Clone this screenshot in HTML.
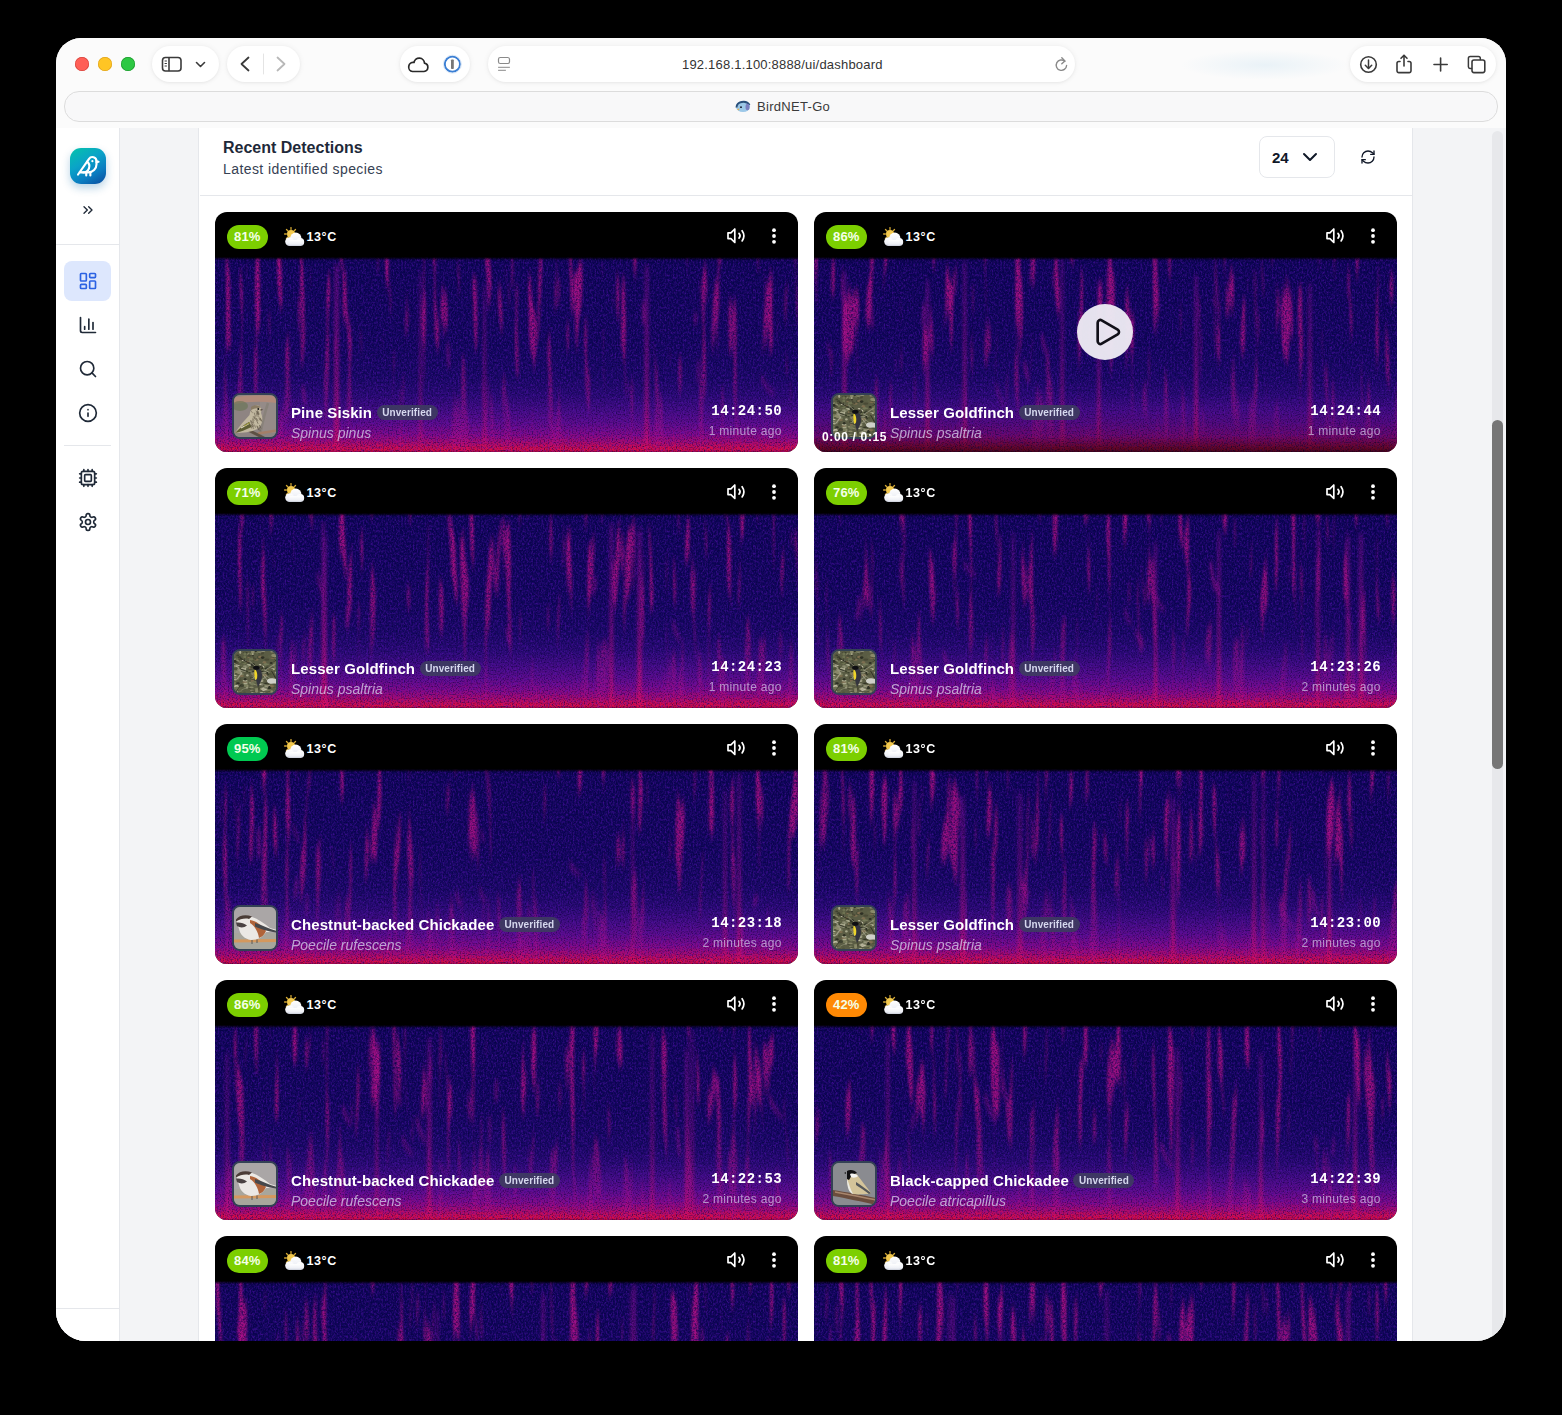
<!DOCTYPE html><html><head><meta charset="utf-8"><title>BirdNET-Go</title><style>

*{margin:0;padding:0;box-sizing:border-box}
html,body{width:1562px;height:1415px;overflow:hidden;background:#000;font-family:"Liberation Sans",sans-serif}
.win{position:absolute;left:56px;top:38px;width:1450px;height:1303px;border-radius:25px 25px 30px 30px;overflow:hidden;background:#fafafa}
.abs{position:absolute}
.tb{position:absolute;left:0;top:0;width:1450px;height:90px;background:linear-gradient(#fbfbfb,#f8f8f8)}
.pill{position:absolute;top:8px;height:36px;border-radius:18px;background:#fff;box-shadow:0 0 6px rgba(0,0,0,0.06),0 1px 3px rgba(0,0,0,0.05)}
.dot{position:absolute;top:19px;width:14px;height:14px;border-radius:50%}
.tabbar{position:absolute;left:8px;top:53px;width:1434px;height:30px;border-radius:15px;border:1.5px solid #dcdcdc;background:#f7f7f8}
.url{position:absolute;left:626px;top:21px;font-size:13px;color:#333;letter-spacing:0.05px}
.tabt{position:absolute;left:701px;top:62px;font-size:13px;color:#3c3c3c}
.content{position:absolute;left:0;top:90px;width:1450px;height:1213px;background:#f3f4f6}
.side{position:absolute;left:0;top:0;width:63px;height:1213px;background:#fff;border-right:1px solid #e5e7eb}
.panel{position:absolute;left:143px;top:0;width:1214px;height:1213px;background:#fff;border-left:1px solid #e5e7eb;border-right:1px solid #e5e7eb}
.track{position:absolute;left:1436px;top:3px;width:11px;height:1210px;background:#e6e7ea;border-radius:5px 5px 0 0}
.thumbbar{position:absolute;left:1436px;top:292px;width:11px;height:349px;background:#767676;border-radius:6px}
.card{position:absolute;width:583px;height:240px;border-radius:12px;overflow:hidden;background:#000}
.spec{position:absolute;left:0;top:45px;width:583px;height:195px}
.badge{position:absolute;left:12px;top:13px;height:24px;border-radius:12px;color:#f4ffe8;font-size:13px;font-weight:bold;line-height:24px;text-align:center;letter-spacing:0.2px}
.temp{position:absolute;left:91.5px;top:16px;font-size:12.5px;font-weight:bold;color:#fff;letter-spacing:0.6px}
.thumb{position:absolute;left:17px;top:181px;width:46px;height:46px;border-radius:8px;border:2px solid #334155;overflow:hidden;background:#8a8580}
.name{position:absolute;left:76px;top:191px;font-size:15px;font-weight:bold;color:#fff;white-space:nowrap;display:flex;align-items:center;letter-spacing:0.1px}
.unv{display:inline-block;margin-left:4.5px;height:15.5px;line-height:15.5px;padding:0 5.5px;border-radius:8px;background:rgba(62,62,96,0.88);color:#d6d8ee;font-size:10px;font-weight:bold;position:relative;top:0px;letter-spacing:0.1px}
.sci{position:absolute;left:76px;top:212px;font-size:14px;font-style:italic;color:rgba(215,205,235,0.78);white-space:nowrap}
.time{position:absolute;right:15.9px;top:189px;font-family:"Liberation Mono",monospace;font-size:14px;font-weight:bold;color:#fff;letter-spacing:0.45px}
.ago{position:absolute;right:16.3px;top:211px;font-size:12px;color:rgba(225,215,245,0.66);letter-spacing:0.3px}

</style></head><body>
<svg width="0" height="0" style="position:absolute">
<defs>
<linearGradient id="sg" x1="0" y1="0" x2="0" y2="1">
<stop offset="0" stop-color="#070342"/>
<stop offset="0.03" stop-color="#0b0554"/>
<stop offset="0.45" stop-color="#0f065a"/>
<stop offset="0.62" stop-color="#160862"/>
<stop offset="0.71" stop-color="#260a70"/>
<stop offset="0.78" stop-color="#400c80"/>
<stop offset="0.85" stop-color="#5e0c8a"/>
<stop offset="0.91" stop-color="#860a86"/>
<stop offset="0.95" stop-color="#ae0a6c"/>
<stop offset="0.975" stop-color="#d00c50"/>
<stop offset="0.99" stop-color="#de0c44"/>
<stop offset="1" stop-color="#a0063e"/>
</linearGradient>
<linearGradient id="smask" x1="0" y1="0" x2="0" y2="1">
<stop offset="0" stop-color="#fff" stop-opacity="1"/>
<stop offset="0.45" stop-color="#fff" stop-opacity="0.85"/>
<stop offset="0.75" stop-color="#fff" stop-opacity="0.5"/>
<stop offset="1" stop-color="#fff" stop-opacity="0.3"/>
</linearGradient>
<linearGradient id="colg" x1="0" y1="0" x2="0" y2="1">
<stop offset="0" stop-color="#a012a0" stop-opacity="0.5"/>
<stop offset="0.6" stop-color="#c0108a" stop-opacity="0.7"/>
<stop offset="1" stop-color="#e01060" stop-opacity="0.9"/>
</linearGradient>
<filter color-interpolation-filters="sRGB" id="blot" x="0" y="0" width="100%" height="100%">
<feTurbulence type="fractalNoise" baseFrequency="0.6 0.4" numOctaves="2" seed="21"/>
<feColorMatrix type="matrix" values="0 0 0 0 0.36  0 0 0 0 0.08  0 0 0 0 0.72  0 0 0 2.4 -0.95"/>
</filter>
<filter color-interpolation-filters="sRGB" id="spk" x="0" y="0" width="100%" height="100%">
<feTurbulence type="fractalNoise" baseFrequency="0.75" numOctaves="1" seed="5"/>
<feColorMatrix type="matrix" values="0 0 0 0 0.02  0 0 0 0 0.01  0 0 0 0 0.2  0 0 0 -3 1.6"/>
</filter>
<filter color-interpolation-filters="sRGB" id="cb" x="-50%" y="0" width="200%" height="100%"><feGaussianBlur stdDeviation="1.4 3"/></filter>
<linearGradient id="topfade" x1="0" y1="0" x2="0" y2="1">
<stop offset="0" stop-color="#000" stop-opacity="1"/>
<stop offset="1" stop-color="#000" stop-opacity="0"/>
</linearGradient>
<linearGradient id="hov" x1="0" y1="0" x2="0" y2="1">
<stop offset="0" stop-color="#000" stop-opacity="0"/>
<stop offset="0.78" stop-color="#000" stop-opacity="0"/>
<stop offset="0.92" stop-color="#000" stop-opacity="0.2"/>
<stop offset="1" stop-color="#000" stop-opacity="0.62"/>
</linearGradient>
<filter color-interpolation-filters="sRGB" id="bl" x="-50%" y="-10%" width="200%" height="120%"><feGaussianBlur stdDeviation="1.1 2"/></filter>
<filter color-interpolation-filters="sRGB" id="nz" x="0" y="0" width="100%" height="100%">
<feTurbulence type="fractalNoise" baseFrequency="0.7" numOctaves="2" seed="3"/>
<feColorMatrix type="matrix" values="0 0 0 0 0.02  0 0 0 0 0  0 0 0 0 0.15  0 0 0 -3 1.55"/>
</filter>
<filter color-interpolation-filters="sRGB" id="nz2" x="0" y="0" width="100%" height="100%">
<feTurbulence type="fractalNoise" baseFrequency="0.7" numOctaves="2" seed="11"/>
<feColorMatrix type="matrix" values="0 0 0 0 0.4  0 0 0 0 0.08  0 0 0 0 0.75  0 0 0 3 -1.5"/>
</filter>
</defs></svg>
<svg width="0" height="0" style="position:absolute"><defs><symbol id="th_siskin" viewBox="0 0 43 43"><filter color-interpolation-filters="sRGB" id="tb_siskin" x="-5%" y="-5%" width="110%" height="110%"><feGaussianBlur stdDeviation="0.45"/></filter><g filter="url(#tb_siskin)"><rect width="43" height="43" fill="#8e8482"/>
<rect x="26" y="6" width="17" height="32" fill="#958b88"/>
<path d="M0 2 Q20 -1 43 1 V8 Q20 5 0 9Z" fill="#b08a7a"/>
<ellipse cx="6" cy="11" rx="8" ry="5" fill="#6a7456" opacity="0.65"/>
<path d="M34 8 Q30 20 26 40" stroke="#7e7a6c" stroke-width="2.5" opacity="0.5" fill="none"/>
<path d="M24 38.5 L43 35.5" stroke="#a47e68" stroke-width="2.6"/>
<path d="M8 32 L30 43" stroke="#5e5044" stroke-width="3"/>
<path d="M1 38 C5 31 11 25 15.5 20 C16.5 14 19.5 10 23.5 10.2 C27 10.5 28 14 27 18 C29.5 24 28.5 30 23.5 34 C17 37 9 38 1 38Z" fill="#c2b8a0"/>
<path d="M17 12 C20 9.5 25 9.5 27 12.5 C25 13 21 13 17 15Z" fill="#8a7c64"/>
<path d="M1 38 C6 33 10 29.5 15 27 L17.5 32 C11 35 7 37 1 38Z" fill="#5e5e34"/>
<path d="M7 33 L15 28.5" stroke="#dcd6be" stroke-width="1.2"/>
<path d="M10 31 L16 27.5" stroke="#9a9436" stroke-width="1"/>
<path d="M18.4 24.3 l1.4 3.7" stroke="#5a5040" stroke-width="0.61" opacity="0.85"/><path d="M16.7 15.2 l2.0 3.0" stroke="#5a5040" stroke-width="0.51" opacity="0.85"/><path d="M26.0 23.0 l2.0 3.5" stroke="#5a5040" stroke-width="0.61" opacity="0.85"/><path d="M17.5 25.8 l2.0 3.5" stroke="#5a5040" stroke-width="0.64" opacity="0.85"/><path d="M22.7 16.1 l1.9 3.7" stroke="#5a5040" stroke-width="0.53" opacity="0.85"/><path d="M16.3 29.7 l1.6 3.9" stroke="#5a5040" stroke-width="0.67" opacity="0.85"/><path d="M23.1 30.7 l1.5 4.1" stroke="#5a5040" stroke-width="0.56" opacity="0.85"/><path d="M25.4 29.9 l1.1 2.8" stroke="#5a5040" stroke-width="0.50" opacity="0.85"/><path d="M25.7 22.4 l1.8 3.1" stroke="#5a5040" stroke-width="0.58" opacity="0.85"/><path d="M19.9 21.0 l1.7 3.7" stroke="#5a5040" stroke-width="0.68" opacity="0.85"/><path d="M22.8 30.8 l2.0 4.5" stroke="#5a5040" stroke-width="0.62" opacity="0.85"/><path d="M17.6 29.6 l2.2 4.3" stroke="#5a5040" stroke-width="0.59" opacity="0.85"/><path d="M23.1 18.6 l2.0 3.6" stroke="#5a5040" stroke-width="0.52" opacity="0.85"/><path d="M16.6 29.5 l2.2 2.7" stroke="#5a5040" stroke-width="0.65" opacity="0.85"/><path d="M20.1 17.6 l1.4 4.0" stroke="#5a5040" stroke-width="0.67" opacity="0.85"/><path d="M16.4 25.4 l1.1 3.9" stroke="#5a5040" stroke-width="0.53" opacity="0.85"/><path d="M24.8 31.7 l1.6 4.5" stroke="#5a5040" stroke-width="0.53" opacity="0.85"/><path d="M16.8 25.2 l1.0 2.9" stroke="#5a5040" stroke-width="0.55" opacity="0.85"/><path d="M22.1 17.7 l1.1 4.2" stroke="#5a5040" stroke-width="0.53" opacity="0.85"/><path d="M25.6 30.2 l1.5 3.4" stroke="#5a5040" stroke-width="0.58" opacity="0.85"/><path d="M22.4 25.1 l1.7 3.7" stroke="#5a5040" stroke-width="0.69" opacity="0.85"/><path d="M21.1 22.3 l1.9 3.0" stroke="#5a5040" stroke-width="0.53" opacity="0.85"/><path d="M25.8 23.9 l1.7 2.5" stroke="#5a5040" stroke-width="0.55" opacity="0.85"/><path d="M21.8 15.3 l1.7 3.8" stroke="#5a5040" stroke-width="0.47" opacity="0.85"/><path d="M22.3 22.9 l1.8 3.2" stroke="#5a5040" stroke-width="0.63" opacity="0.85"/><path d="M23.4 15.4 l1.1 3.9" stroke="#5a5040" stroke-width="0.69" opacity="0.85"/><path d="M18.5 22.8 l1.7 3.1" stroke="#5a5040" stroke-width="0.54" opacity="0.85"/><path d="M19.1 21.3 l1.7 3.1" stroke="#5a5040" stroke-width="0.54" opacity="0.85"/><path d="M23.7 15.5 l1.7 4.0" stroke="#5a5040" stroke-width="0.53" opacity="0.85"/><path d="M18.2 28.7 l1.3 2.9" stroke="#5a5040" stroke-width="0.56" opacity="0.85"/><path d="M23.0 16.7 l1.4 3.2" stroke="#5a5040" stroke-width="0.66" opacity="0.85"/><path d="M20.4 29.5 l1.2 3.2" stroke="#5a5040" stroke-width="0.61" opacity="0.85"/><path d="M24.8 22.7 l1.3 2.7" stroke="#5a5040" stroke-width="0.58" opacity="0.85"/><path d="M17.9 28.7 l2.0 2.9" stroke="#5a5040" stroke-width="0.52" opacity="0.85"/>
<circle cx="24.3" cy="14" r="0.95" fill="#151515"/>
<path d="M26.6 14 L29.2 14.8 L26.6 15.7Z" fill="#4e4034"/></g></symbol><symbol id="th_goldfinch" viewBox="0 0 43 43"><filter color-interpolation-filters="sRGB" id="tb_goldfinch" x="-5%" y="-5%" width="110%" height="110%"><feGaussianBlur stdDeviation="0.45"/></filter><g filter="url(#tb_goldfinch)"><rect width="43" height="43" fill="#5a5c44"/><ellipse cx="13.9" cy="6.5" rx="2.0" ry="0.7" fill="#7e6e50"/><ellipse cx="4.0" cy="25.1" rx="2.4" ry="0.9" fill="#6e7252"/><ellipse cx="18.6" cy="3.0" rx="1.0" ry="1.1" fill="#c0bca4"/><ellipse cx="5.3" cy="9.6" rx="1.9" ry="1.7" fill="#c0bca4"/><ellipse cx="25.2" cy="2.1" rx="1.2" ry="1.3" fill="#3e4230"/><ellipse cx="12.5" cy="6.2" rx="1.0" ry="1.0" fill="#4a4a36"/><ellipse cx="7.8" cy="25.0" rx="2.0" ry="1.0" fill="#7e6e50"/><ellipse cx="30.6" cy="24.3" rx="1.9" ry="1.2" fill="#7e6e50"/><ellipse cx="18.4" cy="13.5" rx="1.9" ry="1.1" fill="#5e6046"/><ellipse cx="10.7" cy="7.7" rx="2.2" ry="0.7" fill="#5e6046"/><ellipse cx="22.6" cy="37.6" rx="2.1" ry="0.9" fill="#6e7252"/><ellipse cx="5.1" cy="18.0" rx="2.2" ry="0.8" fill="#767a5a"/><ellipse cx="18.1" cy="41.4" rx="0.9" ry="1.3" fill="#a8a88c"/><ellipse cx="14.6" cy="15.1" rx="1.7" ry="1.6" fill="#6e7252"/><ellipse cx="36.1" cy="40.6" rx="1.7" ry="1.4" fill="#50543a"/><ellipse cx="31.4" cy="13.3" rx="1.8" ry="1.4" fill="#767a5a"/><ellipse cx="12.2" cy="16.6" rx="2.0" ry="0.6" fill="#767a5a"/><ellipse cx="15.3" cy="26.3" rx="1.7" ry="0.9" fill="#5e6046"/><ellipse cx="5.6" cy="10.6" rx="1.5" ry="1.6" fill="#6e7252"/><ellipse cx="7.2" cy="17.3" rx="1.3" ry="0.8" fill="#2e3024"/><ellipse cx="37.2" cy="12.0" rx="1.5" ry="1.0" fill="#2e3024"/><ellipse cx="41.2" cy="6.5" rx="1.1" ry="0.9" fill="#8a8a6a"/><ellipse cx="0.5" cy="35.7" rx="1.1" ry="0.9" fill="#3e4230"/><ellipse cx="18.0" cy="15.9" rx="1.8" ry="1.7" fill="#7e6e50"/><ellipse cx="40.9" cy="28.2" rx="2.1" ry="1.1" fill="#4a4a36"/><ellipse cx="34.3" cy="16.9" rx="1.5" ry="0.7" fill="#4a4a36"/><ellipse cx="17.2" cy="8.2" rx="2.6" ry="1.1" fill="#6e7252"/><ellipse cx="14.6" cy="2.3" rx="0.8" ry="0.8" fill="#6e7252"/><ellipse cx="40.8" cy="26.4" rx="0.9" ry="0.8" fill="#2e3024"/><ellipse cx="6.4" cy="10.8" rx="1.4" ry="1.0" fill="#6e7252"/><ellipse cx="5.0" cy="21.0" rx="2.6" ry="1.2" fill="#5e6046"/><ellipse cx="3.7" cy="4.4" rx="1.4" ry="0.9" fill="#3e4230"/><ellipse cx="22.2" cy="8.8" rx="2.5" ry="1.0" fill="#7e6e50"/><ellipse cx="39.3" cy="32.6" rx="1.3" ry="1.4" fill="#6e7252"/><ellipse cx="29.9" cy="11.2" rx="1.5" ry="0.8" fill="#8a8a6a"/><ellipse cx="22.9" cy="33.5" rx="1.4" ry="0.9" fill="#8a8a6a"/><ellipse cx="34.7" cy="35.2" rx="2.1" ry="0.9" fill="#7e6e50"/><ellipse cx="21.2" cy="31.4" rx="2.6" ry="1.5" fill="#767a5a"/><ellipse cx="11.1" cy="29.8" rx="2.5" ry="1.1" fill="#a8a88c"/><ellipse cx="41.1" cy="15.7" rx="1.2" ry="0.9" fill="#8a8a6a"/><ellipse cx="14.5" cy="20.8" rx="2.6" ry="1.3" fill="#50543a"/><ellipse cx="20.6" cy="28.1" rx="2.2" ry="0.7" fill="#4a4a36"/><ellipse cx="5.2" cy="16.7" rx="2.1" ry="0.8" fill="#3e4230"/><ellipse cx="18.7" cy="27.3" rx="1.0" ry="1.7" fill="#2e3024"/><ellipse cx="19.9" cy="32.0" rx="1.0" ry="0.8" fill="#3e4230"/><ellipse cx="1.2" cy="25.4" rx="1.6" ry="1.4" fill="#c0bca4"/><ellipse cx="35.5" cy="42.2" rx="2.0" ry="1.0" fill="#7e6e50"/><ellipse cx="23.6" cy="0.9" rx="2.2" ry="1.5" fill="#6e7252"/><ellipse cx="22.6" cy="40.1" rx="1.6" ry="1.6" fill="#8a8a6a"/><ellipse cx="1.2" cy="9.1" rx="1.7" ry="1.5" fill="#a8a88c"/><ellipse cx="11.2" cy="18.0" rx="1.0" ry="1.7" fill="#a8a88c"/><ellipse cx="38.6" cy="28.5" rx="2.3" ry="1.2" fill="#7e6e50"/><ellipse cx="5.6" cy="6.5" rx="1.7" ry="1.6" fill="#3e4230"/><ellipse cx="26.2" cy="33.4" rx="1.1" ry="0.8" fill="#c0bca4"/><ellipse cx="31.2" cy="23.9" rx="1.4" ry="1.2" fill="#7e6e50"/><ellipse cx="20.7" cy="33.4" rx="2.4" ry="0.7" fill="#8a8a6a"/><ellipse cx="11.9" cy="33.2" rx="1.7" ry="1.3" fill="#6e7252"/><ellipse cx="19.1" cy="26.3" rx="1.7" ry="1.2" fill="#5e6046"/><ellipse cx="19.5" cy="22.9" rx="1.7" ry="1.7" fill="#7e6e50"/><ellipse cx="37.7" cy="40.5" rx="1.3" ry="1.3" fill="#8a8a6a"/><ellipse cx="36.1" cy="5.9" rx="1.0" ry="1.1" fill="#6e7252"/><ellipse cx="28.9" cy="18.4" rx="1.2" ry="1.0" fill="#6e7252"/><ellipse cx="38.6" cy="6.6" rx="2.1" ry="1.4" fill="#3e4230"/><ellipse cx="10.9" cy="5.9" rx="1.6" ry="1.5" fill="#6e7252"/><ellipse cx="17.1" cy="21.0" rx="2.6" ry="1.6" fill="#3e4230"/><ellipse cx="30.4" cy="42.7" rx="1.5" ry="1.1" fill="#a8a88c"/><ellipse cx="13.7" cy="31.1" rx="0.8" ry="1.3" fill="#767a5a"/><ellipse cx="30.2" cy="16.5" rx="1.7" ry="1.0" fill="#6e7252"/><ellipse cx="4.9" cy="39.5" rx="1.2" ry="1.7" fill="#6e7252"/><ellipse cx="11.4" cy="1.7" rx="2.2" ry="0.9" fill="#3e4230"/><ellipse cx="35.3" cy="36.5" rx="2.0" ry="1.7" fill="#2e3024"/><ellipse cx="6.4" cy="39.5" rx="1.8" ry="1.4" fill="#6e7252"/><ellipse cx="12.0" cy="34.4" rx="1.1" ry="1.7" fill="#5e6046"/><ellipse cx="40.3" cy="27.3" rx="2.2" ry="0.7" fill="#8a8a6a"/><ellipse cx="2.9" cy="37.1" rx="1.6" ry="1.0" fill="#7e6e50"/><ellipse cx="18.0" cy="39.4" rx="1.9" ry="0.7" fill="#8a8a6a"/><ellipse cx="40.3" cy="41.7" rx="1.3" ry="0.8" fill="#5e6046"/><ellipse cx="27.0" cy="22.8" rx="1.2" ry="1.1" fill="#4a4a36"/><ellipse cx="7.6" cy="14.9" rx="0.8" ry="0.9" fill="#50543a"/><ellipse cx="0.8" cy="21.7" rx="2.6" ry="1.2" fill="#8a8a6a"/><ellipse cx="40.2" cy="4.6" rx="2.3" ry="1.1" fill="#767a5a"/><ellipse cx="23.5" cy="38.2" rx="2.5" ry="1.0" fill="#8a8a6a"/><ellipse cx="42.2" cy="14.7" rx="2.3" ry="1.4" fill="#4a4a36"/><ellipse cx="6.0" cy="42.5" rx="2.6" ry="1.6" fill="#50543a"/><ellipse cx="3.0" cy="31.9" rx="1.3" ry="0.8" fill="#6e7252"/><ellipse cx="28.6" cy="16.4" rx="1.7" ry="1.8" fill="#c0bca4"/><ellipse cx="10.4" cy="12.6" rx="1.6" ry="0.8" fill="#767a5a"/><ellipse cx="0.2" cy="15.7" rx="1.4" ry="1.8" fill="#a8a88c"/><ellipse cx="10.5" cy="41.5" rx="1.4" ry="1.0" fill="#50543a"/><ellipse cx="14.4" cy="3.6" rx="1.3" ry="1.4" fill="#8a8a6a"/><ellipse cx="21.7" cy="0.2" rx="1.3" ry="0.7" fill="#2e3024"/><ellipse cx="25.2" cy="16.9" rx="1.3" ry="1.4" fill="#6e7252"/><ellipse cx="25.2" cy="22.8" rx="2.2" ry="1.4" fill="#c0bca4"/><ellipse cx="16.7" cy="14.0" rx="2.6" ry="0.8" fill="#c0bca4"/><ellipse cx="27.7" cy="1.9" rx="2.3" ry="1.7" fill="#4a4a36"/><ellipse cx="18.5" cy="30.1" rx="1.7" ry="1.7" fill="#7e6e50"/><ellipse cx="24.4" cy="35.0" rx="0.8" ry="1.4" fill="#4a4a36"/><ellipse cx="41.1" cy="27.6" rx="1.0" ry="0.7" fill="#4a4a36"/><ellipse cx="15.5" cy="4.5" rx="2.3" ry="1.3" fill="#4a4a36"/><ellipse cx="0.8" cy="22.9" rx="1.2" ry="0.9" fill="#767a5a"/><ellipse cx="34.3" cy="32.2" rx="1.7" ry="1.2" fill="#4a4a36"/><ellipse cx="22.6" cy="32.1" rx="1.7" ry="1.6" fill="#5e6046"/><ellipse cx="10.1" cy="32.5" rx="1.2" ry="1.4" fill="#767a5a"/><ellipse cx="21.2" cy="16.5" rx="1.7" ry="1.4" fill="#50543a"/><ellipse cx="26.5" cy="27.6" rx="0.9" ry="0.8" fill="#5e6046"/><ellipse cx="28.0" cy="29.8" rx="1.9" ry="0.8" fill="#767a5a"/><ellipse cx="2.6" cy="11.6" rx="2.0" ry="1.4" fill="#4a4a36"/><ellipse cx="21.1" cy="30.5" rx="1.3" ry="1.2" fill="#6e7252"/><ellipse cx="42.7" cy="23.6" rx="1.4" ry="0.7" fill="#767a5a"/><ellipse cx="0.8" cy="19.7" rx="2.3" ry="1.8" fill="#767a5a"/><ellipse cx="42.7" cy="16.6" rx="2.4" ry="1.7" fill="#6e7252"/><ellipse cx="25.0" cy="6.1" rx="1.7" ry="1.7" fill="#3e4230"/><ellipse cx="25.9" cy="27.2" rx="1.3" ry="0.7" fill="#a8a88c"/><ellipse cx="9.9" cy="38.6" rx="1.7" ry="0.6" fill="#50543a"/><ellipse cx="40.8" cy="29.3" rx="1.5" ry="1.5" fill="#2e3024"/><ellipse cx="14.8" cy="13.6" rx="2.3" ry="0.6" fill="#a8a88c"/><ellipse cx="36.1" cy="5.2" rx="2.5" ry="1.5" fill="#5e6046"/><ellipse cx="10.9" cy="2.8" rx="1.5" ry="1.6" fill="#6e7252"/><ellipse cx="15.5" cy="18.4" rx="1.3" ry="0.7" fill="#6e7252"/><ellipse cx="2.2" cy="28.5" rx="1.9" ry="0.8" fill="#5e6046"/><ellipse cx="18.8" cy="13.6" rx="2.2" ry="1.5" fill="#2e3024"/><ellipse cx="38.0" cy="34.9" rx="1.9" ry="1.7" fill="#7e6e50"/><ellipse cx="23.6" cy="30.9" rx="0.9" ry="1.5" fill="#767a5a"/><ellipse cx="26.4" cy="6.0" rx="2.4" ry="1.2" fill="#7e6e50"/><ellipse cx="5.5" cy="20.3" rx="1.4" ry="1.0" fill="#4a4a36"/><ellipse cx="11.2" cy="28.2" rx="1.3" ry="1.3" fill="#2e3024"/><ellipse cx="5.1" cy="27.7" rx="0.9" ry="1.2" fill="#767a5a"/><ellipse cx="23.7" cy="19.5" rx="1.4" ry="1.5" fill="#2e3024"/><ellipse cx="6.0" cy="8.3" rx="1.0" ry="1.0" fill="#6e7252"/><ellipse cx="13.7" cy="15.8" rx="2.3" ry="0.8" fill="#50543a"/><ellipse cx="32.2" cy="17.7" rx="1.5" ry="1.2" fill="#2e3024"/><ellipse cx="11.6" cy="32.3" rx="1.7" ry="1.3" fill="#a8a88c"/><ellipse cx="5.4" cy="21.6" rx="1.9" ry="1.6" fill="#8a8a6a"/><ellipse cx="4.0" cy="38.6" rx="1.5" ry="1.4" fill="#2e3024"/><ellipse cx="41.0" cy="36.5" rx="2.4" ry="0.6" fill="#50543a"/><ellipse cx="18.3" cy="32.8" rx="2.2" ry="1.8" fill="#767a5a"/><ellipse cx="0.0" cy="16.8" rx="2.5" ry="1.6" fill="#767a5a"/><ellipse cx="41.8" cy="10.7" rx="1.0" ry="0.8" fill="#7e6e50"/><ellipse cx="41.8" cy="4.7" rx="2.3" ry="1.4" fill="#767a5a"/><ellipse cx="3.7" cy="33.4" rx="0.8" ry="0.8" fill="#c0bca4"/><ellipse cx="39.6" cy="27.8" rx="1.3" ry="0.8" fill="#5e6046"/><ellipse cx="22.7" cy="18.8" rx="2.2" ry="0.7" fill="#5e6046"/><ellipse cx="22.6" cy="25.1" rx="1.5" ry="0.9" fill="#c0bca4"/><ellipse cx="0.0" cy="23.1" rx="2.6" ry="0.9" fill="#a8a88c"/><ellipse cx="27.7" cy="38.0" rx="1.7" ry="0.9" fill="#8a8a6a"/><ellipse cx="1.3" cy="17.7" rx="2.0" ry="0.7" fill="#8a8a6a"/><ellipse cx="21.4" cy="29.0" rx="1.6" ry="0.9" fill="#4a4a36"/><ellipse cx="18.2" cy="15.9" rx="1.7" ry="1.4" fill="#2e3024"/><ellipse cx="15.6" cy="17.0" rx="0.8" ry="1.0" fill="#7e6e50"/><ellipse cx="2.9" cy="21.3" rx="1.2" ry="1.5" fill="#8a8a6a"/><ellipse cx="9.9" cy="9.5" rx="2.2" ry="1.0" fill="#c0bca4"/><ellipse cx="21.3" cy="8.1" rx="1.2" ry="1.1" fill="#4a4a36"/><ellipse cx="2.4" cy="25.6" rx="2.5" ry="0.7" fill="#50543a"/><ellipse cx="41.9" cy="6.1" rx="0.9" ry="0.7" fill="#2e3024"/><ellipse cx="19.3" cy="30.6" rx="1.4" ry="0.7" fill="#6e7252"/><ellipse cx="40.1" cy="14.2" rx="1.1" ry="1.7" fill="#767a5a"/><ellipse cx="1.4" cy="28.6" rx="1.5" ry="1.0" fill="#a8a88c"/><ellipse cx="19.0" cy="4.7" rx="0.9" ry="0.7" fill="#2e3024"/><ellipse cx="41.1" cy="5.3" rx="2.5" ry="0.8" fill="#a8a88c"/><ellipse cx="33.1" cy="13.3" rx="2.2" ry="0.7" fill="#767a5a"/><ellipse cx="8.4" cy="23.3" rx="1.6" ry="1.0" fill="#767a5a"/><ellipse cx="1.3" cy="17.7" rx="2.3" ry="1.5" fill="#50543a"/><ellipse cx="16.1" cy="20.0" rx="2.2" ry="0.7" fill="#8a8a6a"/><ellipse cx="32.1" cy="38.6" rx="1.4" ry="0.9" fill="#c0bca4"/><ellipse cx="1.9" cy="32.1" rx="2.0" ry="1.7" fill="#5e6046"/><ellipse cx="0.2" cy="32.5" rx="2.4" ry="1.4" fill="#6e7252"/><ellipse cx="1.0" cy="10.1" rx="1.7" ry="1.7" fill="#2e3024"/><ellipse cx="34.0" cy="39.3" rx="2.3" ry="0.8" fill="#767a5a"/><ellipse cx="7.9" cy="34.5" rx="2.1" ry="1.6" fill="#3e4230"/><ellipse cx="26.1" cy="14.1" rx="1.4" ry="1.0" fill="#c0bca4"/><ellipse cx="3.4" cy="8.5" rx="2.2" ry="0.9" fill="#6e7252"/><ellipse cx="27.9" cy="20.7" rx="1.8" ry="0.8" fill="#2e3024"/><ellipse cx="38.0" cy="42.5" rx="1.3" ry="0.7" fill="#6e7252"/><ellipse cx="18.1" cy="42.5" rx="2.5" ry="0.8" fill="#3e4230"/><ellipse cx="17.9" cy="26.7" rx="2.0" ry="1.5" fill="#4a4a36"/><ellipse cx="32.7" cy="33.5" rx="1.3" ry="0.9" fill="#5e6046"/><ellipse cx="16.0" cy="31.7" rx="1.2" ry="0.9" fill="#8a8a6a"/><ellipse cx="10.1" cy="12.1" rx="2.4" ry="0.8" fill="#6e7252"/><ellipse cx="17.0" cy="42.7" rx="1.7" ry="0.9" fill="#6e7252"/><ellipse cx="28.1" cy="42.6" rx="1.0" ry="1.2" fill="#8a8a6a"/><ellipse cx="36.1" cy="39.3" rx="0.9" ry="1.0" fill="#6e7252"/><ellipse cx="2.2" cy="25.8" rx="2.3" ry="0.8" fill="#6e7252"/><ellipse cx="16.0" cy="37.2" rx="1.6" ry="0.9" fill="#4a4a36"/><ellipse cx="40.7" cy="4.5" rx="1.9" ry="1.3" fill="#8a8a6a"/><ellipse cx="1.6" cy="14.6" rx="0.9" ry="1.8" fill="#50543a"/><ellipse cx="25.8" cy="28.0" rx="1.2" ry="0.6" fill="#a8a88c"/><ellipse cx="17.6" cy="16.0" rx="1.9" ry="0.7" fill="#50543a"/><ellipse cx="34.2" cy="23.6" rx="0.9" ry="0.7" fill="#2e3024"/><ellipse cx="28.6" cy="6.6" rx="1.8" ry="1.4" fill="#2e3024"/><ellipse cx="29.9" cy="17.6" rx="1.3" ry="1.0" fill="#50543a"/><ellipse cx="13.4" cy="24.4" rx="1.4" ry="1.1" fill="#a8a88c"/><ellipse cx="27.7" cy="16.8" rx="1.5" ry="1.7" fill="#2e3024"/><ellipse cx="38.8" cy="18.2" rx="2.3" ry="1.1" fill="#a8a88c"/><ellipse cx="19.8" cy="7.0" rx="0.8" ry="1.3" fill="#4a4a36"/><ellipse cx="34.7" cy="17.1" rx="1.8" ry="1.7" fill="#7e6e50"/><ellipse cx="7.4" cy="15.0" rx="1.1" ry="0.8" fill="#6e7252"/><ellipse cx="4.7" cy="21.1" rx="2.2" ry="1.8" fill="#8a8a6a"/><ellipse cx="13.0" cy="36.0" rx="0.9" ry="1.7" fill="#a8a88c"/><ellipse cx="2.3" cy="39.8" rx="1.5" ry="1.7" fill="#c0bca4"/><ellipse cx="29.6" cy="38.3" rx="2.0" ry="1.6" fill="#c0bca4"/><ellipse cx="17.4" cy="36.4" rx="2.3" ry="0.8" fill="#8a8a6a"/><ellipse cx="1.8" cy="40.4" rx="1.1" ry="1.0" fill="#3e4230"/><ellipse cx="10.6" cy="31.2" rx="2.4" ry="0.6" fill="#7e6e50"/><ellipse cx="36.2" cy="28.9" rx="2.0" ry="1.0" fill="#2e3024"/><ellipse cx="25.8" cy="23.7" rx="1.9" ry="1.0" fill="#2e3024"/><ellipse cx="13.3" cy="10.7" rx="1.5" ry="1.0" fill="#7e6e50"/><ellipse cx="18.8" cy="1.0" rx="1.9" ry="1.2" fill="#8a8a6a"/><ellipse cx="19.2" cy="26.6" rx="2.3" ry="1.6" fill="#767a5a"/><ellipse cx="17.2" cy="2.9" rx="1.4" ry="1.0" fill="#767a5a"/><ellipse cx="21.7" cy="28.3" rx="0.9" ry="0.8" fill="#a8a88c"/><ellipse cx="33.4" cy="22.0" rx="0.9" ry="1.2" fill="#2e3024"/><ellipse cx="28.1" cy="33.7" rx="0.8" ry="0.7" fill="#c0bca4"/><ellipse cx="31.5" cy="35.0" rx="1.1" ry="1.8" fill="#767a5a"/><ellipse cx="12.4" cy="34.9" rx="2.2" ry="1.4" fill="#8a8a6a"/><ellipse cx="2.8" cy="15.1" rx="2.2" ry="0.8" fill="#c0bca4"/><ellipse cx="11.8" cy="35.1" rx="1.1" ry="1.2" fill="#767a5a"/><ellipse cx="9.0" cy="11.3" rx="1.7" ry="1.0" fill="#50543a"/><ellipse cx="8.6" cy="17.3" rx="1.9" ry="0.9" fill="#a8a88c"/><ellipse cx="38.5" cy="7.3" rx="2.2" ry="0.7" fill="#7e6e50"/><ellipse cx="2.1" cy="36.9" rx="2.5" ry="1.1" fill="#7e6e50"/><ellipse cx="24.9" cy="37.9" rx="1.0" ry="1.8" fill="#4a4a36"/><ellipse cx="36.8" cy="31.7" rx="1.5" ry="1.1" fill="#a8a88c"/><ellipse cx="24.8" cy="15.5" rx="2.2" ry="1.1" fill="#3e4230"/><ellipse cx="26.5" cy="41.2" rx="1.3" ry="1.2" fill="#5e6046"/><ellipse cx="27.5" cy="42.3" rx="1.9" ry="1.4" fill="#a8a88c"/><ellipse cx="31.5" cy="32.1" rx="1.2" ry="0.9" fill="#4a4a36"/><ellipse cx="18.6" cy="22.0" rx="2.4" ry="0.8" fill="#8a8a6a"/><ellipse cx="26.3" cy="2.0" rx="0.9" ry="1.3" fill="#5e6046"/><ellipse cx="4.6" cy="15.4" rx="1.2" ry="1.3" fill="#c0bca4"/><ellipse cx="5.8" cy="15.7" rx="2.3" ry="0.8" fill="#50543a"/><ellipse cx="40.3" cy="10.5" rx="1.1" ry="0.7" fill="#4a4a36"/><ellipse cx="6.2" cy="28.6" rx="1.3" ry="1.6" fill="#50543a"/><ellipse cx="2.4" cy="35.3" rx="2.4" ry="1.3" fill="#c0bca4"/><ellipse cx="19.1" cy="40.3" rx="2.1" ry="0.9" fill="#50543a"/><ellipse cx="1.9" cy="22.9" rx="1.5" ry="0.9" fill="#50543a"/><ellipse cx="39.2" cy="4.5" rx="1.9" ry="1.4" fill="#8a8a6a"/><ellipse cx="6.1" cy="8.6" rx="1.9" ry="1.2" fill="#4a4a36"/><ellipse cx="17.9" cy="26.4" rx="1.7" ry="0.7" fill="#4a4a36"/><ellipse cx="2.1" cy="38.2" rx="2.2" ry="1.5" fill="#50543a"/><ellipse cx="16.1" cy="18.8" rx="2.4" ry="0.7" fill="#4a4a36"/><ellipse cx="19.5" cy="9.7" rx="1.0" ry="0.9" fill="#50543a"/><ellipse cx="5.3" cy="38.3" rx="2.5" ry="1.7" fill="#5e6046"/><ellipse cx="30.6" cy="11.4" rx="1.8" ry="1.1" fill="#7e6e50"/><ellipse cx="41.8" cy="12.7" rx="2.5" ry="1.7" fill="#6e7252"/><ellipse cx="37.8" cy="0.7" rx="1.3" ry="0.9" fill="#8a8a6a"/><ellipse cx="40.6" cy="32.1" rx="1.4" ry="1.7" fill="#a8a88c"/><ellipse cx="25.9" cy="16.3" rx="2.3" ry="1.7" fill="#4a4a36"/><ellipse cx="36.2" cy="23.1" rx="1.6" ry="1.2" fill="#50543a"/><ellipse cx="36.9" cy="18.8" rx="2.1" ry="1.3" fill="#5e6046"/><ellipse cx="33.9" cy="16.8" rx="1.9" ry="1.3" fill="#3e4230"/><ellipse cx="6.2" cy="1.2" rx="1.0" ry="1.7" fill="#a8a88c"/><ellipse cx="42.0" cy="30.1" rx="0.9" ry="0.8" fill="#4a4a36"/><ellipse cx="27.3" cy="30.0" rx="2.1" ry="0.7" fill="#c0bca4"/><ellipse cx="32.8" cy="8.6" rx="2.5" ry="1.2" fill="#4a4a36"/><ellipse cx="2.8" cy="37.3" rx="2.4" ry="1.7" fill="#6e7252"/><ellipse cx="10.6" cy="8.7" rx="0.9" ry="1.7" fill="#4a4a36"/><ellipse cx="3.8" cy="32.3" rx="1.9" ry="1.2" fill="#3e4230"/><ellipse cx="4.2" cy="32.6" rx="1.2" ry="1.0" fill="#2e3024"/><ellipse cx="11.2" cy="15.1" rx="2.5" ry="0.7" fill="#a8a88c"/><ellipse cx="39.1" cy="33.1" rx="1.9" ry="1.2" fill="#5e6046"/><line x1="24.7" y1="1.3" x2="31.2" y2="0.1" stroke="#b4b29a" stroke-width="0.8" opacity="0.8"/><line x1="28.8" y1="23.1" x2="34.1" y2="30.4" stroke="#b4b29a" stroke-width="0.9" opacity="0.8"/><line x1="8.8" y1="18.8" x2="15.9" y2="14.5" stroke="#b4b29a" stroke-width="0.6" opacity="0.8"/><line x1="18.6" y1="21.1" x2="27.3" y2="14.8" stroke="#2a2c20" stroke-width="1.0" opacity="0.8"/><line x1="40.9" y1="22.2" x2="48.4" y2="15.3" stroke="#b4b29a" stroke-width="1.2" opacity="0.8"/><line x1="6.1" y1="7.1" x2="15.7" y2="12.5" stroke="#2a2c20" stroke-width="1.1" opacity="0.8"/><line x1="28.5" y1="33.8" x2="36.2" y2="31.0" stroke="#2a2c20" stroke-width="1.2" opacity="0.8"/><line x1="37.8" y1="32.0" x2="44.3" y2="35.0" stroke="#2a2c20" stroke-width="0.7" opacity="0.8"/><line x1="7.6" y1="38.8" x2="14.6" y2="36.3" stroke="#9a9a80" stroke-width="0.7" opacity="0.8"/><line x1="17.1" y1="22.9" x2="25.7" y2="27.9" stroke="#9a9a80" stroke-width="0.6" opacity="0.8"/><line x1="22.9" y1="22.4" x2="32.1" y2="21.4" stroke="#9a9a80" stroke-width="1.0" opacity="0.8"/><line x1="3.1" y1="18.9" x2="11.8" y2="20.5" stroke="#b4b29a" stroke-width="0.8" opacity="0.8"/><line x1="25.8" y1="30.0" x2="32.9" y2="25.3" stroke="#9a9a80" stroke-width="1.1" opacity="0.8"/><line x1="24.6" y1="31.1" x2="34.5" y2="35.6" stroke="#9a9a80" stroke-width="0.9" opacity="0.8"/><line x1="2.7" y1="14.1" x2="7.9" y2="23.6" stroke="#9a9a80" stroke-width="1.2" opacity="0.8"/><line x1="2.9" y1="28.3" x2="8.1" y2="21.3" stroke="#b4b29a" stroke-width="1.1" opacity="0.8"/><line x1="30.2" y1="18.7" x2="35.4" y2="21.5" stroke="#b4b29a" stroke-width="0.8" opacity="0.8"/><line x1="37.5" y1="19.9" x2="41.6" y2="27.0" stroke="#2a2c20" stroke-width="1.0" opacity="0.8"/><line x1="19.0" y1="27.2" x2="25.8" y2="20.0" stroke="#9a9a80" stroke-width="1.0" opacity="0.8"/><line x1="-4.7" y1="10.4" x2="4.4" y2="14.4" stroke="#9a9a80" stroke-width="1.0" opacity="0.8"/><line x1="15.2" y1="9.8" x2="23.5" y2="17.4" stroke="#9a9a80" stroke-width="1.0" opacity="0.8"/><line x1="35.9" y1="29.2" x2="43.8" y2="28.3" stroke="#2a2c20" stroke-width="0.8" opacity="0.8"/><line x1="28.6" y1="38.5" x2="34.1" y2="36.5" stroke="#9a9a80" stroke-width="1.0" opacity="0.8"/><line x1="7.0" y1="18.2" x2="13.7" y2="20.6" stroke="#2a2c20" stroke-width="0.9" opacity="0.8"/><line x1="26.7" y1="37.5" x2="36.1" y2="34.1" stroke="#b4b29a" stroke-width="0.8" opacity="0.8"/><line x1="18.5" y1="41.9" x2="22.7" y2="42.8" stroke="#b4b29a" stroke-width="1.0" opacity="0.8"/><line x1="40.7" y1="8.6" x2="46.8" y2="15.5" stroke="#2a2c20" stroke-width="0.9" opacity="0.8"/><line x1="29.4" y1="22.0" x2="37.3" y2="28.6" stroke="#9a9a80" stroke-width="0.8" opacity="0.8"/><line x1="30.6" y1="19.6" x2="40.6" y2="13.3" stroke="#9a9a80" stroke-width="1.1" opacity="0.8"/><line x1="0.9" y1="42.3" x2="7.0" y2="33.5" stroke="#2a2c20" stroke-width="0.8" opacity="0.8"/>
<ellipse cx="38" cy="30" rx="5" ry="2.8" fill="#cfd0c8"/>
<path d="M22 17 C25 16 27 18 27.5 21 C28.5 25 28 29 26 32 L24 36 L22.5 31 C21.5 26 21.5 21 22 17Z" fill="#34343e"/>
<path d="M20.5 18.5 C22.5 19 23.5 22 23.2 26 C23 28.5 21.8 29.5 21 28 C20.3 25 20.2 21 20.5 18.5Z" fill="#eed42a"/>
<ellipse cx="22.3" cy="16.8" rx="3.2" ry="2" fill="#0e0e12"/></g></symbol><symbol id="th_cbch" viewBox="0 0 43 43"><filter color-interpolation-filters="sRGB" id="tb_cbch" x="-5%" y="-5%" width="110%" height="110%"><feGaussianBlur stdDeviation="0.45"/></filter><g filter="url(#tb_cbch)"><rect width="43" height="43" fill="#aaa6a6"/>
<rect y="26" width="43" height="17" fill="#a8a69c"/>
<path d="M0 34 L43 33.5" stroke="#d4985e" stroke-width="2.8"/>
<path d="M2 13 C6 9 13 8 18 10 C24 12 30 16 36 21 L43 23 L42 25 L32 25 C29 30 24 33 17 33 C10 32 6 27 5 22 C4 19 3 16 2 13Z" fill="#ebe8e4"/>
<path d="M16 13 C22 14 28 18 32 24 C30 28 28 30 25 31 C24 25 21 19 16 16Z" fill="#b0643a"/>
<path d="M21 16 C28 18 35 22 43 24 L42 25.5 C34 24.5 26 22 21 19.5Z" fill="#46484c"/>
<path d="M2 12.5 C5 8 12 7 18 9.5 L15 12 C11 11 6 12 2 14.5Z" fill="#4a3c36"/>
<path d="M2 15.5 C6 15 10 16 13 18.5 C10 21 6 21 3 19Z" fill="#4a4242"/>
<path d="M18 33 L18 37 M23 32.5 L23 36" stroke="#505050" stroke-width="0.9"/></g></symbol><symbol id="th_bcch" viewBox="0 0 43 43"><filter color-interpolation-filters="sRGB" id="tb_bcch" x="-5%" y="-5%" width="110%" height="110%"><feGaussianBlur stdDeviation="0.45"/></filter><g filter="url(#tb_bcch)"><rect width="43" height="43" fill="#8a8b90"/>
<path d="M0 27 C12 29 30 32 43 35 L43 42 C30 39 12 35 0 33Z" fill="#6a4c3c"/>
<path d="M2 29 C14 31 28 34 43 37" stroke="#b89478" stroke-width="1.6" fill="none" opacity="0.8"/>
<path d="M14 10 C17 8 23 9 25 13 C28 17 33 23 38 30 L35 31 C31 31 25 32 20 31 C16 28 14 22 14 16Z" fill="#d4c49a"/>
<path d="M14 16 C16 20 17 26 20 31 C16 30 14 24 14 16Z" fill="#ecebe4"/>
<path d="M23 19 C28 22 33 26 38 30 L36 31 C31 27 26 24 23 22Z" fill="#56585a"/>
<path d="M14 8 C17 6 22 7 24 10 L19 12 L16 17 L14 16Z" fill="#101012"/>
<path d="M17 11 C20 10 23 11 25 13 C23 15 20 15 18 14Z" fill="#f4f4f2"/>
<path d="M13 9 L11 10 L13 11Z" fill="#222"/></g></symbol></defs></svg>
<div class="win"><div class="abs" style="left:-56px;top:-38px;width:1562px;height:1415px">
<div class="abs" style="left:56px;top:38px;width:1450px;height:90px;background:#fbfbfb"></div>
<div class="abs" style="left:1180px;top:50px;width:170px;height:30px;border-radius:15px;background:radial-gradient(ellipse at center,rgba(200,225,240,0.35),rgba(255,255,255,0) 70%)"></div>
<div class="abs" style="left:75px;top:57px;width:14px;height:14px;border-radius:50%;background:#ff5f57;box-shadow:inset 0 0 0 0.7px #d6463f"></div>
<div class="abs" style="left:98px;top:57px;width:14px;height:14px;border-radius:50%;background:#ffc524;box-shadow:inset 0 0 0 0.7px #e0a520"></div>
<div class="abs" style="left:121px;top:57px;width:14px;height:14px;border-radius:50%;background:#2dc843;box-shadow:inset 0 0 0 0.7px #1f9a2f"></div>
<div class="pill" style="left:152px;top:46px;width:67px"></div>
<div class="pill" style="left:227px;top:46px;width:73px"></div>
<div class="pill" style="left:400px;top:46px;width:70px"></div>
<div class="pill" style="left:488px;top:46px;width:587px"></div>
<div class="pill" style="left:1350px;top:46px;width:146px"></div>
<div class="abs" style="left:64px;top:91px;width:1434px;height:30.5px;border-radius:15px;border:1.5px solid #dcdcdc;background:#f8f8f9"></div>
<div class="abs " style="left:682px;top:57.80px;font-size:13px;line-height:1;white-space:nowrap;color:#333;letter-spacing:0.2px">192.168.1.100:8888/ui/dashboard</div>
<div class="abs " style="left:757px;top:99.80px;font-size:13px;line-height:1;white-space:nowrap;color:#3a3a3a;letter-spacing:0.3px">BirdNET-Go</div>
<svg class="abs" style="left:0;top:0" width="1562" height="130" viewBox="0 0 1562 130" fill="none" stroke-linecap="round" stroke-linejoin="round">
<rect x="162.5" y="57.5" width="18.5" height="13.5" rx="3" stroke="#3a3a3a" stroke-width="1.6"/>
<line x1="169" y1="58" x2="169" y2="70.5" stroke="#3a3a3a" stroke-width="1.6"/>
<line x1="165" y1="61" x2="166.5" y2="61" stroke="#3a3a3a" stroke-width="1"/>
<line x1="165" y1="63.5" x2="166.5" y2="63.5" stroke="#3a3a3a" stroke-width="1"/>
<line x1="165" y1="66" x2="166.5" y2="66" stroke="#3a3a3a" stroke-width="1"/>
<polyline points="196.5,62.5 200.5,66.5 204.5,62.5" stroke="#3a3a3a" stroke-width="1.6"/>
<polyline points="248.5,57.5 241.5,64 248.5,70.5" stroke="#3a3a3a" stroke-width="1.8"/>
<line x1="263.5" y1="54" x2="263.5" y2="74" stroke="#e4e4e4" stroke-width="1"/>
<polyline points="277.5,57.5 284.5,64 277.5,70.5" stroke="#b8b8b8" stroke-width="1.8"/>
<path d="M412.5 71.5 H424 A4.2 4.2 0 0 0 424.5 63.2 A5.3 5.3 0 0 0 414 62.5 A4.5 4.5 0 0 0 412.5 71.5 Z" stroke="#2a2a2a" stroke-width="1.7"/>
<circle cx="452.4" cy="64.2" r="7.6" fill="#fff" stroke="#3b7fd4" stroke-width="2"/>
<circle cx="452.4" cy="64.2" r="9" stroke="#dbe8f7" stroke-width="1"/>
<rect x="451" y="59.5" width="2.8" height="9.5" rx="0.8" fill="#777" stroke="none"/>
<rect x="498.5" y="57.5" width="11" height="6" rx="1.8" stroke="#8a8a8a" stroke-width="1.2"/>
<line x1="498.5" y1="67.3" x2="509.5" y2="67.3" stroke="#8a8a8a" stroke-width="1"/>
<line x1="498.5" y1="70.3" x2="505.5" y2="70.3" stroke="#8a8a8a" stroke-width="1"/>
<path d="M1064.8 61.2 A5.2 5.2 0 1 0 1066.6 65.5" stroke="#8a8a8a" stroke-width="1.4"/>
<polyline points="1061.8,57.8 1064.9,60.9 1061.8,63.8" stroke="#8a8a8a" stroke-width="1.4"/>
<circle cx="1368.5" cy="64.5" r="7.8" stroke="#3a3a3a" stroke-width="1.6"/>
<line x1="1368.5" y1="60" x2="1368.5" y2="68.3" stroke="#3a3a3a" stroke-width="1.5"/>
<polyline points="1365.3,65.3 1368.5,68.5 1371.7,65.3" stroke="#3a3a3a" stroke-width="1.5"/>
<path d="M1400 61.5 H1398.8 A1.8 1.8 0 0 0 1397 63.3 V70.8 A1.8 1.8 0 0 0 1398.8 72.6 H1409.2 A1.8 1.8 0 0 0 1411 70.8 V63.3 A1.8 1.8 0 0 0 1409.2 61.5 H1408" stroke="#3a3a3a" stroke-width="1.6"/>
<line x1="1404" y1="55.5" x2="1404" y2="66" stroke="#3a3a3a" stroke-width="1.6"/>
<polyline points="1401,58.3 1404,55.3 1407,58.3" stroke="#3a3a3a" stroke-width="1.6"/>
<line x1="1434" y1="64.5" x2="1447.2" y2="64.5" stroke="#3a3a3a" stroke-width="1.6"/>
<line x1="1440.6" y1="58" x2="1440.6" y2="71" stroke="#3a3a3a" stroke-width="1.6"/>
<path d="M1471.5 68.5 H1470 A1.8 1.8 0 0 1 1468.4 66.8 V58.3 A1.8 1.8 0 0 1 1470.2 56.5 H1478.5 A1.8 1.8 0 0 1 1480.3 58.3 V59.5" stroke="#3a3a3a" stroke-width="1.5"/>
<rect x="1472" y="60" width="12.8" height="12.6" rx="2" stroke="#3a3a3a" stroke-width="1.6"/>
</svg>
<svg class="abs" style="left:735px;top:99px" width="16" height="14" viewBox="0 0 16 14">
<ellipse cx="8" cy="7.5" rx="7" ry="5.6" fill="#9cc8e8"/>
<path d="M1.5 8.5 A6.8 5.5 0 0 1 14.5 6" stroke="#2a4f7a" stroke-width="2" fill="none"/>
<ellipse cx="12.5" cy="8" rx="2" ry="3.2" fill="#7a7fc0"/>
<circle cx="6" cy="8.2" r="0.9" fill="#112"/>
<path d="M2 10 l2.5 -0.5 l-1 2z" fill="#f0b040"/>
</svg>
<div class="abs" style="left:56px;top:128px;width:1450px;height:1213px;background:#f3f4f6"></div>
<div class="abs" style="left:56px;top:128px;width:64px;height:1213px;background:#fff;border-right:1px solid #e5e7eb"></div>
<div class="abs" style="left:70px;top:148px;width:36px;height:36px;border-radius:11px;background:linear-gradient(150deg,#05c3aa 0%,#0aa3c8 40%,#0a7cc0 70%,#0b4a9c 100%);box-shadow:0 4px 9px rgba(20,110,170,0.30)"></div>
<svg class="abs" style="left:75.8px;top:153.5px" width="24.6" height="24.6" viewBox="0 0 24 24" fill="none" stroke="#fff" stroke-width="2.1" stroke-linecap="round" stroke-linejoin="round"><path d="M16 7h.01"/><path d="M3.4 18H12a8 8 0 0 0 8-8V7a4 4 0 0 0-7.28-2.3L2 20"/><path d="m20 7 2 .5-2 .5"/><path d="M10 18v3"/><path d="M14 17.75V21"/><path d="M7 18a6 6 0 0 0 3.84-10.61"/></svg>
<svg class="abs" style="left:80px;top:202px" width="16" height="16" viewBox="0 0 24 24" fill="none" stroke="#1f2937" stroke-width="2" stroke-linecap="round" stroke-linejoin="round"><path d="m6 17 5-5-5-5"/><path d="m13 17 5-5-5-5"/></svg>
<div class="abs" style="left:56px;top:244px;width:63px;height:1px;background:#e5e7eb"></div>
<div class="abs" style="left:64px;top:261px;width:47px;height:40px;border-radius:8px;background:#dde7fd"></div>
<svg class="abs" style="left:78px;top:271px" width="20" height="20" viewBox="0 0 24 24" fill="none" stroke="#2b62e3" stroke-width="2" stroke-linecap="round" stroke-linejoin="round"><rect width="7" height="9" x="3" y="3" rx="1"/><rect width="7" height="5" x="14" y="3" rx="1"/><rect width="7" height="9" x="14" y="12" rx="1"/><rect width="7" height="5" x="3" y="16" rx="1"/></svg>
<svg class="abs" style="left:78px;top:315px" width="20" height="20" viewBox="0 0 24 24" fill="none" stroke="#1f2937" stroke-width="2" stroke-linecap="round" stroke-linejoin="round"><path d="M3 3v16a2 2 0 0 0 2 2h16"/><path d="M18 17V9"/><path d="M13 17V5"/><path d="M8 17v-3"/></svg>
<svg class="abs" style="left:78px;top:359px" width="20" height="20" viewBox="0 0 24 24" fill="none" stroke="#1f2937" stroke-width="2" stroke-linecap="round" stroke-linejoin="round"><circle cx="11" cy="11" r="8"/><path d="m21 21-4.3-4.3"/></svg>
<svg class="abs" style="left:78px;top:403px" width="20" height="20" viewBox="0 0 24 24" fill="none" stroke="#1f2937" stroke-width="2" stroke-linecap="round" stroke-linejoin="round"><circle cx="12" cy="12" r="10"/><path d="M12 16v-4"/><path d="M12 8h.01"/></svg>
<div class="abs" style="left:64px;top:445px;width:47px;height:1px;background:#e5e7eb"></div>
<svg class="abs" style="left:78px;top:468px" width="20" height="20" viewBox="0 0 24 24" fill="none" stroke="#1f2937" stroke-width="2" stroke-linecap="round" stroke-linejoin="round"><path d="M12 20v2"/><path d="M12 2v2"/><path d="M17 20v2"/><path d="M17 2v2"/><path d="M2 12h2"/><path d="M2 17h2"/><path d="M2 7h2"/><path d="M20 12h2"/><path d="M20 17h2"/><path d="M20 7h2"/><path d="M7 20v2"/><path d="M7 2v2"/><rect x="4" y="4" width="16" height="16" rx="2"/><rect x="8" y="8" width="8" height="8" rx="1"/></svg>
<svg class="abs" style="left:78px;top:512px" width="20" height="20" viewBox="0 0 24 24" fill="none" stroke="#1f2937" stroke-width="2" stroke-linecap="round" stroke-linejoin="round"><path d="M12.22 2h-.44a2 2 0 0 0-2 2v.18a2 2 0 0 1-1 1.73l-.43.25a2 2 0 0 1-2 0l-.15-.08a2 2 0 0 0-2.73.73l-.22.38a2 2 0 0 0 .73 2.73l.15.1a2 2 0 0 1 1 1.72v.51a2 2 0 0 1-1 1.74l-.15.09a2 2 0 0 0-.73 2.73l.22.38a2 2 0 0 0 2.73.73l.15-.08a2 2 0 0 1 2 0l.43.25a2 2 0 0 1 1 1.73V20a2 2 0 0 0 2 2h.44a2 2 0 0 0 2-2v-.18a2 2 0 0 1 1-1.73l.43-.25a2 2 0 0 1 2 0l.15.08a2 2 0 0 0 2.73-.73l.22-.39a2 2 0 0 0-.73-2.73l-.15-.08a2 2 0 0 1-1-1.74v-.5a2 2 0 0 1 1-1.74l.15-.09a2 2 0 0 0 .73-2.73l-.22-.38a2 2 0 0 0-2.73-.73l-.15.08a2 2 0 0 1-2 0l-.43-.25a2 2 0 0 1-1-1.73V4a2 2 0 0 0-2-2z"/><circle cx="12" cy="12" r="3"/></svg>
<div class="abs" style="left:56px;top:1308px;width:63px;height:1px;background:#e5e7eb"></div>
<div class="abs" style="left:198px;top:128px;width:1215px;height:1213px;background:#fff;border-left:1px solid #e5e7eb;border-right:1px solid #e5e7eb"></div>
<div class="abs" style="left:200px;top:195px;width:1212px;height:1px;background:#e5e7eb"></div>
<div class="abs " style="left:223px;top:139.96px;font-size:16px;line-height:1;white-space:nowrap;font-weight:bold;color:#1e2939">Recent Detections</div>
<div class="abs " style="left:223px;top:161.75px;font-size:14px;line-height:1;white-space:nowrap;color:#364153;letter-spacing:0.42px">Latest identified species</div>
<div class="abs" style="left:1259px;top:136px;width:76px;height:42px;border-radius:8px;border:1px solid #e5e7eb;background:#fff"></div>
<div class="abs " style="left:1272px;top:150.30px;font-size:15px;line-height:1;white-space:nowrap;font-weight:bold;color:#101828">24</div>
<svg class="abs" style="left:1298px;top:145px" width="24" height="24" viewBox="0 0 24 24" fill="none" stroke="#101828" stroke-width="2" stroke-linecap="round" stroke-linejoin="round"><path d="m6 9 6 6 6-6"/></svg>
<svg class="abs" style="left:1360px;top:149px" width="16" height="16" viewBox="0 0 24 24" fill="none" stroke="#101828" stroke-width="2" stroke-linecap="round" stroke-linejoin="round"><path d="M3 12a9 9 0 0 1 9-9 9.75 9.75 0 0 1 6.74 2.74L21 8"/><path d="M21 3v5h-5"/><path d="M21 12a9 9 0 0 1-9 9 9.75 9.75 0 0 1-6.74-2.74L3 16"/><path d="M8 16H3v5"/></svg>
<div class="abs" style="left:1492px;top:131px;width:11px;height:1215px;background:#e7e8eb;border-radius:6px 6px 0 0"></div>
<div class="abs" style="left:1492px;top:420px;width:11px;height:349px;background:#767676;border-radius:6px"></div>
<div class="card" style="left:215px;top:212px"><svg class="spec" width="583" height="195" viewBox="0 0 583 195"><defs><filter color-interpolation-filters="sRGB" id="st100" x="0" y="0" width="100%" height="100%"><feTurbulence type="fractalNoise" baseFrequency="0.13 0.009" numOctaves="2" seed="100" result="t"/><feColorMatrix in="t" type="matrix" values="0 0 0 0 0.8  0 0 0 0 0.08  0 0 0 0 0.55  0 0 0 10 -6.0" result="s"/><feGaussianBlur in="s" stdDeviation="1.1 1.8" result="sb"/><feTurbulence type="fractalNoise" baseFrequency="0.45" numOctaves="1" seed="107" result="n"/><feColorMatrix in="n" type="matrix" values="0 0 0 0 0  0 0 0 0 0  0 0 0 0 0  0 0 0 2.2 -0.2" result="na"/><feComposite in="sb" in2="na" operator="in" result="sp"/><feComposite in="sp" in2="SourceGraphic" operator="in"/></filter></defs><rect width="583" height="195" fill="url(#sg)"/><rect width="583" height="195" filter="url(#blot)" opacity="0.55"/><g filter="url(#cb)"><rect x="267.9" y="28.6" width="3.3" height="166.4" fill="url(#colg)" opacity="0.59"/><rect x="203.9" y="15.2" width="3.2" height="179.8" fill="url(#colg)" opacity="0.49"/><rect x="429.5" y="7.9" width="4.3" height="187.1" fill="url(#colg)" opacity="0.68"/><rect x="119.2" y="6.9" width="4.7" height="188.1" fill="url(#colg)" opacity="0.80"/><path d="M87.9 129.3 q0.9 12.2 2.7 17.4" stroke="#c8149a" stroke-width="2.4" fill="none" opacity="0.56"/><path d="M232.9 86.1 q0.3 17.0 1.0 24.3" stroke="#c8149a" stroke-width="2.4" fill="none" opacity="0.44"/><path d="M483.6 103.8 q-0.2 14.6 -0.7 20.8" stroke="#c8149a" stroke-width="2.4" fill="none" opacity="0.39"/><path d="M480.9 56.3 q-0.3 7.3 -1.0 10.5" stroke="#c8149a" stroke-width="2.4" fill="none" opacity="0.52"/><path d="M546.5 119.9 q4.2 11.9 12.6 17.0" stroke="#c8149a" stroke-width="2.4" fill="none" opacity="0.51"/><path d="M428.5 45.2 q0.1 14.8 0.4 21.1" stroke="#c8149a" stroke-width="2.4" fill="none" opacity="0.58"/></g><rect width="583" height="195" fill="url(#smask)" filter="url(#st100)" opacity="0.8"/><rect width="583" height="195" filter="url(#spk)" opacity="0.6"/><rect width="583" height="3" fill="url(#topfade)"/></svg><div class="badge" style="background:#7ccf00;padding:0 7px">81%</div><svg class="abs" style="left:68px;top:14px" width="24" height="22" viewBox="0 0 24 22">
<defs><linearGradient id="cg6814" x1="0" y1="0" x2="0" y2="1"><stop offset="0" stop-color="#ffffff"/><stop offset="0.7" stop-color="#eef0f6"/><stop offset="1" stop-color="#c8ccd8"/></linearGradient></defs>
<g stroke="#e8b838" stroke-width="1.3" stroke-linecap="round" opacity="0.9"><line x1="4.75" y1="11.25" x2="3.47" y2="12.53"/><line x1="3.40" y1="8.00" x2="1.60" y2="8.00"/><line x1="4.75" y1="4.75" x2="3.47" y2="3.47"/><line x1="8.00" y1="3.40" x2="8.00" y2="1.60"/><line x1="11.25" y1="4.75" x2="12.53" y2="3.47"/></g>
<circle cx="8" cy="8" r="4" fill="#f3c94e"/>
<g fill="url(#cg6814)"><circle cx="12.8" cy="12.2" r="5.6"/><circle cx="6.6" cy="15.6" r="4.4"/><circle cx="17.2" cy="16" r="4"/><rect x="6.5" y="14" width="11" height="6"/></g>
</svg><div class="temp" style="top:19.42px;line-height:1">13°C</div><svg class="abs" style="left:510px;top:13.2px" width="22" height="20" viewBox="0 0 22 20" fill="none" stroke="#fff" stroke-width="1.7" stroke-linecap="round" stroke-linejoin="round">
<path d="M3 7.8 H5.9 L9.8 4 V17.5 L5.9 13.6 H3 Z"/>
<path d="M14 8.4 Q16.2 10.75 14 13.1"/>
<path d="M17.1 5.7 Q20.7 10.8 17.1 15.9"/>
</svg><svg class="abs" style="left:556px;top:15px" width="6" height="18" viewBox="0 0 6 18" fill="#fff">
<circle cx="3" cy="3.2" r="1.9"/><circle cx="3" cy="9" r="1.9"/><circle cx="3" cy="14.85" r="1.9"/>
</svg><div class="thumb"><svg width="43" height="43" style="display:block"><use href="#th_siskin"/></svg></div><div class="name" style="top:192.90px;line-height:1"><span>Pine Siskin</span><span class="unv">Unverified</span></div><div class="sci" style="top:213.85px;line-height:1">Spinus pinus</div><div class="time" style="top:191.85px;line-height:1">14:24:50</div><div class="ago" style="top:212.84px;line-height:1">1 minute ago</div></div>
<div class="card" style="left:814px;top:212px"><svg class="spec" width="583" height="195" viewBox="0 0 583 195"><defs><filter color-interpolation-filters="sRGB" id="st101" x="0" y="0" width="100%" height="100%"><feTurbulence type="fractalNoise" baseFrequency="0.13 0.009" numOctaves="2" seed="101" result="t"/><feColorMatrix in="t" type="matrix" values="0 0 0 0 0.8  0 0 0 0 0.08  0 0 0 0 0.55  0 0 0 10 -6.0" result="s"/><feGaussianBlur in="s" stdDeviation="1.1 1.8" result="sb"/><feTurbulence type="fractalNoise" baseFrequency="0.45" numOctaves="1" seed="108" result="n"/><feColorMatrix in="n" type="matrix" values="0 0 0 0 0  0 0 0 0 0  0 0 0 0 0  0 0 0 2.2 -0.2" result="na"/><feComposite in="sb" in2="na" operator="in" result="sp"/><feComposite in="sp" in2="SourceGraphic" operator="in"/></filter></defs><rect width="583" height="195" fill="url(#sg)"/><rect width="583" height="195" filter="url(#blot)" opacity="0.55"/><g filter="url(#cb)"><rect x="493.9" y="27.3" width="4.1" height="167.7" fill="url(#colg)" opacity="0.58"/><rect x="28.3" y="15.1" width="4.2" height="179.9" fill="url(#colg)" opacity="0.77"/><rect x="283.0" y="23.5" width="3.7" height="171.5" fill="url(#colg)" opacity="0.60"/><rect x="148.8" y="4.8" width="3.9" height="190.2" fill="url(#colg)" opacity="0.64"/><rect x="111.7" y="23.6" width="3.5" height="171.4" fill="url(#colg)" opacity="0.73"/><rect x="246.2" y="1.9" width="3.9" height="193.1" fill="url(#colg)" opacity="0.52"/><rect x="380.3" y="18.7" width="3.7" height="176.3" fill="url(#colg)" opacity="0.75"/><path d="M228.2 77.9 q1.2 12.1 3.6 17.3" stroke="#c8149a" stroke-width="2.4" fill="none" opacity="0.52"/><path d="M13.6 86.4 q1.9 11.4 5.6 16.2" stroke="#c8149a" stroke-width="2.4" fill="none" opacity="0.36"/><path d="M399.6 40.9 q2.1 8.9 6.2 12.8" stroke="#c8149a" stroke-width="2.4" fill="none" opacity="0.36"/><path d="M110.0 46.6 q-0.4 15.6 -1.3 22.3" stroke="#c8149a" stroke-width="2.4" fill="none" opacity="0.53"/><path d="M210.6 105.2 q1.5 13.3 4.6 19.0" stroke="#c8149a" stroke-width="2.4" fill="none" opacity="0.57"/><path d="M182.1 127.0 q2.8 15.6 8.4 22.3" stroke="#c8149a" stroke-width="2.4" fill="none" opacity="0.35"/><path d="M56.5 43.2 q0.7 18.9 2.2 27.0" stroke="#c8149a" stroke-width="2.4" fill="none" opacity="0.57"/></g><rect width="583" height="195" fill="url(#smask)" filter="url(#st101)" opacity="0.8"/><rect width="583" height="195" filter="url(#spk)" opacity="0.6"/><rect width="583" height="3" fill="url(#topfade)"/><rect width="583" height="195" fill="url(#hov)"/></svg><div class="badge" style="background:#7ccf00;padding:0 7px">86%</div><svg class="abs" style="left:68px;top:14px" width="24" height="22" viewBox="0 0 24 22">
<defs><linearGradient id="cg6814" x1="0" y1="0" x2="0" y2="1"><stop offset="0" stop-color="#ffffff"/><stop offset="0.7" stop-color="#eef0f6"/><stop offset="1" stop-color="#c8ccd8"/></linearGradient></defs>
<g stroke="#e8b838" stroke-width="1.3" stroke-linecap="round" opacity="0.9"><line x1="4.75" y1="11.25" x2="3.47" y2="12.53"/><line x1="3.40" y1="8.00" x2="1.60" y2="8.00"/><line x1="4.75" y1="4.75" x2="3.47" y2="3.47"/><line x1="8.00" y1="3.40" x2="8.00" y2="1.60"/><line x1="11.25" y1="4.75" x2="12.53" y2="3.47"/></g>
<circle cx="8" cy="8" r="4" fill="#f3c94e"/>
<g fill="url(#cg6814)"><circle cx="12.8" cy="12.2" r="5.6"/><circle cx="6.6" cy="15.6" r="4.4"/><circle cx="17.2" cy="16" r="4"/><rect x="6.5" y="14" width="11" height="6"/></g>
</svg><div class="temp" style="top:19.42px;line-height:1">13°C</div><svg class="abs" style="left:510px;top:13.2px" width="22" height="20" viewBox="0 0 22 20" fill="none" stroke="#fff" stroke-width="1.7" stroke-linecap="round" stroke-linejoin="round">
<path d="M3 7.8 H5.9 L9.8 4 V17.5 L5.9 13.6 H3 Z"/>
<path d="M14 8.4 Q16.2 10.75 14 13.1"/>
<path d="M17.1 5.7 Q20.7 10.8 17.1 15.9"/>
</svg><svg class="abs" style="left:556px;top:15px" width="6" height="18" viewBox="0 0 6 18" fill="#fff">
<circle cx="3" cy="3.2" r="1.9"/><circle cx="3" cy="9" r="1.9"/><circle cx="3" cy="14.85" r="1.9"/>
</svg><div class="thumb"><svg width="43" height="43" style="display:block"><use href="#th_goldfinch"/></svg></div><div class="name" style="top:192.90px;line-height:1"><span>Lesser Goldfinch</span><span class="unv">Unverified</span></div><div class="sci" style="top:213.85px;line-height:1">Spinus psaltria</div><div class="time" style="top:191.85px;line-height:1">14:24:44</div><div class="ago" style="top:212.84px;line-height:1">1 minute ago</div><div class="abs" style="left:263px;top:92px;width:56px;height:56px;border-radius:50%;background:rgba(236,233,243,0.97)"></div><svg class="abs" style="left:276.7px;top:104.1px" width="32" height="32" viewBox="0 0 24 24" fill="none" stroke="#111018" stroke-width="2" stroke-linecap="round" stroke-linejoin="round"><path d="M5 5a2 2 0 0 1 3.008-1.728l11.997 6.998a2 2 0 0 1 .003 3.458l-12 7A2 2 0 0 1 5 19z"/></svg><div class="abs" style="left:8px;top:218.84px;font-size:12px;line-height:1;font-weight:bold;color:#fff;white-space:nowrap;letter-spacing:0.65px">0:00 / 0:15</div></div>
<div class="card" style="left:215px;top:468px"><svg class="spec" width="583" height="195" viewBox="0 0 583 195"><defs><filter color-interpolation-filters="sRGB" id="st102" x="0" y="0" width="100%" height="100%"><feTurbulence type="fractalNoise" baseFrequency="0.13 0.009" numOctaves="2" seed="102" result="t"/><feColorMatrix in="t" type="matrix" values="0 0 0 0 0.8  0 0 0 0 0.08  0 0 0 0 0.55  0 0 0 10 -6.0" result="s"/><feGaussianBlur in="s" stdDeviation="1.1 1.8" result="sb"/><feTurbulence type="fractalNoise" baseFrequency="0.45" numOctaves="1" seed="109" result="n"/><feColorMatrix in="n" type="matrix" values="0 0 0 0 0  0 0 0 0 0  0 0 0 0 0  0 0 0 2.2 -0.2" result="na"/><feComposite in="sb" in2="na" operator="in" result="sp"/><feComposite in="sp" in2="SourceGraphic" operator="in"/></filter></defs><rect width="583" height="195" fill="url(#sg)"/><rect width="583" height="195" filter="url(#blot)" opacity="0.55"/><g filter="url(#cb)"><rect x="394.3" y="10.7" width="4.1" height="184.3" fill="url(#colg)" opacity="0.68"/><rect x="106.4" y="8.8" width="3.9" height="186.2" fill="url(#colg)" opacity="0.65"/><rect x="422.3" y="16.3" width="4.5" height="178.7" fill="url(#colg)" opacity="0.76"/><rect x="108.1" y="23.7" width="3.9" height="171.3" fill="url(#colg)" opacity="0.63"/><path d="M458.0 109.0 q2.3 12.6 7.0 18.0" stroke="#c8149a" stroke-width="2.4" fill="none" opacity="0.48"/><path d="M132.8 93.0 q-0.5 14.8 -1.4 21.2" stroke="#c8149a" stroke-width="2.4" fill="none" opacity="0.51"/><path d="M380.7 64.6 q-0.8 11.2 -2.3 16.0" stroke="#c8149a" stroke-width="2.4" fill="none" opacity="0.52"/><path d="M292.0 114.8 q1.3 12.0 3.8 17.2" stroke="#c8149a" stroke-width="2.4" fill="none" opacity="0.58"/><path d="M102.4 60.7 q2.2 15.0 6.6 21.4" stroke="#c8149a" stroke-width="2.4" fill="none" opacity="0.46"/></g><rect width="583" height="195" fill="url(#smask)" filter="url(#st102)" opacity="0.8"/><rect width="583" height="195" filter="url(#spk)" opacity="0.6"/><rect width="583" height="3" fill="url(#topfade)"/></svg><div class="badge" style="background:#7ccf00;padding:0 7px">71%</div><svg class="abs" style="left:68px;top:14px" width="24" height="22" viewBox="0 0 24 22">
<defs><linearGradient id="cg6814" x1="0" y1="0" x2="0" y2="1"><stop offset="0" stop-color="#ffffff"/><stop offset="0.7" stop-color="#eef0f6"/><stop offset="1" stop-color="#c8ccd8"/></linearGradient></defs>
<g stroke="#e8b838" stroke-width="1.3" stroke-linecap="round" opacity="0.9"><line x1="4.75" y1="11.25" x2="3.47" y2="12.53"/><line x1="3.40" y1="8.00" x2="1.60" y2="8.00"/><line x1="4.75" y1="4.75" x2="3.47" y2="3.47"/><line x1="8.00" y1="3.40" x2="8.00" y2="1.60"/><line x1="11.25" y1="4.75" x2="12.53" y2="3.47"/></g>
<circle cx="8" cy="8" r="4" fill="#f3c94e"/>
<g fill="url(#cg6814)"><circle cx="12.8" cy="12.2" r="5.6"/><circle cx="6.6" cy="15.6" r="4.4"/><circle cx="17.2" cy="16" r="4"/><rect x="6.5" y="14" width="11" height="6"/></g>
</svg><div class="temp" style="top:19.42px;line-height:1">13°C</div><svg class="abs" style="left:510px;top:13.2px" width="22" height="20" viewBox="0 0 22 20" fill="none" stroke="#fff" stroke-width="1.7" stroke-linecap="round" stroke-linejoin="round">
<path d="M3 7.8 H5.9 L9.8 4 V17.5 L5.9 13.6 H3 Z"/>
<path d="M14 8.4 Q16.2 10.75 14 13.1"/>
<path d="M17.1 5.7 Q20.7 10.8 17.1 15.9"/>
</svg><svg class="abs" style="left:556px;top:15px" width="6" height="18" viewBox="0 0 6 18" fill="#fff">
<circle cx="3" cy="3.2" r="1.9"/><circle cx="3" cy="9" r="1.9"/><circle cx="3" cy="14.85" r="1.9"/>
</svg><div class="thumb"><svg width="43" height="43" style="display:block"><use href="#th_goldfinch"/></svg></div><div class="name" style="top:192.90px;line-height:1"><span>Lesser Goldfinch</span><span class="unv">Unverified</span></div><div class="sci" style="top:213.85px;line-height:1">Spinus psaltria</div><div class="time" style="top:191.85px;line-height:1">14:24:23</div><div class="ago" style="top:212.84px;line-height:1">1 minute ago</div></div>
<div class="card" style="left:814px;top:468px"><svg class="spec" width="583" height="195" viewBox="0 0 583 195"><defs><filter color-interpolation-filters="sRGB" id="st103" x="0" y="0" width="100%" height="100%"><feTurbulence type="fractalNoise" baseFrequency="0.13 0.009" numOctaves="2" seed="103" result="t"/><feColorMatrix in="t" type="matrix" values="0 0 0 0 0.8  0 0 0 0 0.08  0 0 0 0 0.55  0 0 0 10 -6.0" result="s"/><feGaussianBlur in="s" stdDeviation="1.1 1.8" result="sb"/><feTurbulence type="fractalNoise" baseFrequency="0.45" numOctaves="1" seed="110" result="n"/><feColorMatrix in="n" type="matrix" values="0 0 0 0 0  0 0 0 0 0  0 0 0 0 0  0 0 0 2.2 -0.2" result="na"/><feComposite in="sb" in2="na" operator="in" result="sp"/><feComposite in="sp" in2="SourceGraphic" operator="in"/></filter></defs><rect width="583" height="195" fill="url(#sg)"/><rect width="583" height="195" filter="url(#blot)" opacity="0.55"/><g filter="url(#cb)"><rect x="544.6" y="20.9" width="4.6" height="174.1" fill="url(#colg)" opacity="0.69"/><rect x="531.9" y="22.2" width="4.3" height="172.8" fill="url(#colg)" opacity="0.61"/><rect x="197.1" y="20.3" width="4.0" height="174.7" fill="url(#colg)" opacity="0.50"/><rect x="340.0" y="29.2" width="3.1" height="165.8" fill="url(#colg)" opacity="0.79"/><rect x="403.1" y="18.2" width="3.6" height="176.8" fill="url(#colg)" opacity="0.71"/><rect x="501.9" y="17.4" width="4.3" height="177.6" fill="url(#colg)" opacity="0.53"/><path d="M326.6 122.7 q0.2 11.7 0.5 16.6" stroke="#c8149a" stroke-width="2.4" fill="none" opacity="0.50"/><path d="M533.1 101.8 q1.5 10.2 4.5 14.5" stroke="#c8149a" stroke-width="2.4" fill="none" opacity="0.42"/><path d="M129.3 138.6 q4.0 18.3 12.0 26.1" stroke="#c8149a" stroke-width="2.4" fill="none" opacity="0.48"/><path d="M401.7 69.6 q1.6 8.8 4.7 12.6" stroke="#c8149a" stroke-width="2.4" fill="none" opacity="0.46"/><path d="M149.7 50.0 q4.2 8.2 12.5 11.7" stroke="#c8149a" stroke-width="2.4" fill="none" opacity="0.55"/><path d="M396.9 49.0 q1.6 19.5 4.7 27.9" stroke="#c8149a" stroke-width="2.4" fill="none" opacity="0.60"/><path d="M321.5 117.2 q2.9 10.7 8.8 15.3" stroke="#c8149a" stroke-width="2.4" fill="none" opacity="0.49"/><path d="M340.1 79.4 q3.6 12.6 10.7 18.0" stroke="#c8149a" stroke-width="2.4" fill="none" opacity="0.54"/><path d="M45.8 84.5 q-1.1 15.2 -3.2 21.6" stroke="#c8149a" stroke-width="2.4" fill="none" opacity="0.57"/><path d="M310.5 96.5 q2.4 9.9 7.2 14.1" stroke="#c8149a" stroke-width="2.4" fill="none" opacity="0.45"/></g><rect width="583" height="195" fill="url(#smask)" filter="url(#st103)" opacity="0.8"/><rect width="583" height="195" filter="url(#spk)" opacity="0.6"/><rect width="583" height="3" fill="url(#topfade)"/></svg><div class="badge" style="background:#7ccf00;padding:0 7px">76%</div><svg class="abs" style="left:68px;top:14px" width="24" height="22" viewBox="0 0 24 22">
<defs><linearGradient id="cg6814" x1="0" y1="0" x2="0" y2="1"><stop offset="0" stop-color="#ffffff"/><stop offset="0.7" stop-color="#eef0f6"/><stop offset="1" stop-color="#c8ccd8"/></linearGradient></defs>
<g stroke="#e8b838" stroke-width="1.3" stroke-linecap="round" opacity="0.9"><line x1="4.75" y1="11.25" x2="3.47" y2="12.53"/><line x1="3.40" y1="8.00" x2="1.60" y2="8.00"/><line x1="4.75" y1="4.75" x2="3.47" y2="3.47"/><line x1="8.00" y1="3.40" x2="8.00" y2="1.60"/><line x1="11.25" y1="4.75" x2="12.53" y2="3.47"/></g>
<circle cx="8" cy="8" r="4" fill="#f3c94e"/>
<g fill="url(#cg6814)"><circle cx="12.8" cy="12.2" r="5.6"/><circle cx="6.6" cy="15.6" r="4.4"/><circle cx="17.2" cy="16" r="4"/><rect x="6.5" y="14" width="11" height="6"/></g>
</svg><div class="temp" style="top:19.42px;line-height:1">13°C</div><svg class="abs" style="left:510px;top:13.2px" width="22" height="20" viewBox="0 0 22 20" fill="none" stroke="#fff" stroke-width="1.7" stroke-linecap="round" stroke-linejoin="round">
<path d="M3 7.8 H5.9 L9.8 4 V17.5 L5.9 13.6 H3 Z"/>
<path d="M14 8.4 Q16.2 10.75 14 13.1"/>
<path d="M17.1 5.7 Q20.7 10.8 17.1 15.9"/>
</svg><svg class="abs" style="left:556px;top:15px" width="6" height="18" viewBox="0 0 6 18" fill="#fff">
<circle cx="3" cy="3.2" r="1.9"/><circle cx="3" cy="9" r="1.9"/><circle cx="3" cy="14.85" r="1.9"/>
</svg><div class="thumb"><svg width="43" height="43" style="display:block"><use href="#th_goldfinch"/></svg></div><div class="name" style="top:192.90px;line-height:1"><span>Lesser Goldfinch</span><span class="unv">Unverified</span></div><div class="sci" style="top:213.85px;line-height:1">Spinus psaltria</div><div class="time" style="top:191.85px;line-height:1">14:23:26</div><div class="ago" style="top:212.84px;line-height:1">2 minutes ago</div></div>
<div class="card" style="left:215px;top:724px"><svg class="spec" width="583" height="195" viewBox="0 0 583 195"><defs><filter color-interpolation-filters="sRGB" id="st104" x="0" y="0" width="100%" height="100%"><feTurbulence type="fractalNoise" baseFrequency="0.13 0.009" numOctaves="2" seed="104" result="t"/><feColorMatrix in="t" type="matrix" values="0 0 0 0 0.8  0 0 0 0 0.08  0 0 0 0 0.55  0 0 0 10 -6.0" result="s"/><feGaussianBlur in="s" stdDeviation="1.1 1.8" result="sb"/><feTurbulence type="fractalNoise" baseFrequency="0.45" numOctaves="1" seed="111" result="n"/><feColorMatrix in="n" type="matrix" values="0 0 0 0 0  0 0 0 0 0  0 0 0 0 0  0 0 0 2.2 -0.2" result="na"/><feComposite in="sb" in2="na" operator="in" result="sp"/><feComposite in="sp" in2="SourceGraphic" operator="in"/></filter></defs><rect width="583" height="195" fill="url(#sg)"/><rect width="583" height="195" filter="url(#blot)" opacity="0.55"/><g filter="url(#cb)"><rect x="508.3" y="22.0" width="3.5" height="173.0" fill="url(#colg)" opacity="0.57"/><rect x="416.2" y="24.2" width="3.0" height="170.8" fill="url(#colg)" opacity="0.51"/><rect x="522.0" y="3.5" width="4.3" height="191.5" fill="url(#colg)" opacity="0.57"/><path d="M43.7 60.3 q0.2 19.4 0.6 27.7" stroke="#c8149a" stroke-width="2.4" fill="none" opacity="0.59"/><path d="M104.9 69.9 q-1.1 12.6 -3.3 18.0" stroke="#c8149a" stroke-width="2.4" fill="none" opacity="0.41"/><path d="M541.7 126.2 q-1.1 7.5 -3.3 10.7" stroke="#c8149a" stroke-width="2.4" fill="none" opacity="0.55"/><path d="M78.5 56.3 q2.0 11.3 6.1 16.2" stroke="#c8149a" stroke-width="2.4" fill="none" opacity="0.37"/><path d="M354.6 94.2 q3.5 8.2 10.6 11.7" stroke="#c8149a" stroke-width="2.4" fill="none" opacity="0.53"/><path d="M264.9 118.9 q1.5 8.7 4.6 12.4" stroke="#c8149a" stroke-width="2.4" fill="none" opacity="0.40"/><path d="M92.2 126.1 q-0.2 13.8 -0.7 19.7" stroke="#c8149a" stroke-width="2.4" fill="none" opacity="0.36"/><path d="M265.6 61.2 q1.3 7.8 4.0 11.1" stroke="#c8149a" stroke-width="2.4" fill="none" opacity="0.37"/><path d="M81.6 109.9 q-0.6 12.9 -1.8 18.5" stroke="#c8149a" stroke-width="2.4" fill="none" opacity="0.49"/><path d="M241.1 123.0 q1.5 9.4 4.6 13.4" stroke="#c8149a" stroke-width="2.4" fill="none" opacity="0.46"/></g><rect width="583" height="195" fill="url(#smask)" filter="url(#st104)" opacity="0.8"/><rect width="583" height="195" filter="url(#spk)" opacity="0.6"/><rect width="583" height="3" fill="url(#topfade)"/></svg><div class="badge" style="background:#00c951;padding:0 7px">95%</div><svg class="abs" style="left:68px;top:14px" width="24" height="22" viewBox="0 0 24 22">
<defs><linearGradient id="cg6814" x1="0" y1="0" x2="0" y2="1"><stop offset="0" stop-color="#ffffff"/><stop offset="0.7" stop-color="#eef0f6"/><stop offset="1" stop-color="#c8ccd8"/></linearGradient></defs>
<g stroke="#e8b838" stroke-width="1.3" stroke-linecap="round" opacity="0.9"><line x1="4.75" y1="11.25" x2="3.47" y2="12.53"/><line x1="3.40" y1="8.00" x2="1.60" y2="8.00"/><line x1="4.75" y1="4.75" x2="3.47" y2="3.47"/><line x1="8.00" y1="3.40" x2="8.00" y2="1.60"/><line x1="11.25" y1="4.75" x2="12.53" y2="3.47"/></g>
<circle cx="8" cy="8" r="4" fill="#f3c94e"/>
<g fill="url(#cg6814)"><circle cx="12.8" cy="12.2" r="5.6"/><circle cx="6.6" cy="15.6" r="4.4"/><circle cx="17.2" cy="16" r="4"/><rect x="6.5" y="14" width="11" height="6"/></g>
</svg><div class="temp" style="top:19.42px;line-height:1">13°C</div><svg class="abs" style="left:510px;top:13.2px" width="22" height="20" viewBox="0 0 22 20" fill="none" stroke="#fff" stroke-width="1.7" stroke-linecap="round" stroke-linejoin="round">
<path d="M3 7.8 H5.9 L9.8 4 V17.5 L5.9 13.6 H3 Z"/>
<path d="M14 8.4 Q16.2 10.75 14 13.1"/>
<path d="M17.1 5.7 Q20.7 10.8 17.1 15.9"/>
</svg><svg class="abs" style="left:556px;top:15px" width="6" height="18" viewBox="0 0 6 18" fill="#fff">
<circle cx="3" cy="3.2" r="1.9"/><circle cx="3" cy="9" r="1.9"/><circle cx="3" cy="14.85" r="1.9"/>
</svg><div class="thumb"><svg width="43" height="43" style="display:block"><use href="#th_cbch"/></svg></div><div class="name" style="top:192.90px;line-height:1"><span>Chestnut-backed Chickadee</span><span class="unv">Unverified</span></div><div class="sci" style="top:213.85px;line-height:1">Poecile rufescens</div><div class="time" style="top:191.85px;line-height:1">14:23:18</div><div class="ago" style="top:212.84px;line-height:1">2 minutes ago</div></div>
<div class="card" style="left:814px;top:724px"><svg class="spec" width="583" height="195" viewBox="0 0 583 195"><defs><filter color-interpolation-filters="sRGB" id="st105" x="0" y="0" width="100%" height="100%"><feTurbulence type="fractalNoise" baseFrequency="0.13 0.009" numOctaves="2" seed="105" result="t"/><feColorMatrix in="t" type="matrix" values="0 0 0 0 0.8  0 0 0 0 0.08  0 0 0 0 0.55  0 0 0 10 -6.0" result="s"/><feGaussianBlur in="s" stdDeviation="1.1 1.8" result="sb"/><feTurbulence type="fractalNoise" baseFrequency="0.45" numOctaves="1" seed="112" result="n"/><feColorMatrix in="n" type="matrix" values="0 0 0 0 0  0 0 0 0 0  0 0 0 0 0  0 0 0 2.2 -0.2" result="na"/><feComposite in="sb" in2="na" operator="in" result="sp"/><feComposite in="sp" in2="SourceGraphic" operator="in"/></filter></defs><rect width="583" height="195" fill="url(#sg)"/><rect width="583" height="195" filter="url(#blot)" opacity="0.55"/><g filter="url(#cb)"><rect x="203.5" y="23.7" width="4.9" height="171.3" fill="url(#colg)" opacity="0.56"/><rect x="447.9" y="10.0" width="3.3" height="185.0" fill="url(#colg)" opacity="0.57"/><rect x="438.0" y="4.4" width="4.3" height="190.6" fill="url(#colg)" opacity="0.57"/><rect x="98.5" y="12.9" width="3.8" height="182.1" fill="url(#colg)" opacity="0.61"/><rect x="513.7" y="27.6" width="3.5" height="167.4" fill="url(#colg)" opacity="0.80"/><rect x="356.8" y="28.8" width="4.6" height="166.2" fill="url(#colg)" opacity="0.63"/><rect x="146.2" y="27.9" width="5.0" height="167.1" fill="url(#colg)" opacity="0.67"/><path d="M208.1 112.6 q2.7 9.3 8.1 13.3" stroke="#c8149a" stroke-width="2.4" fill="none" opacity="0.56"/><path d="M466.2 133.2 q4.4 18.1 13.2 25.8" stroke="#c8149a" stroke-width="2.4" fill="none" opacity="0.49"/><path d="M358.7 89.0 q2.4 11.8 7.2 16.8" stroke="#c8149a" stroke-width="2.4" fill="none" opacity="0.42"/><path d="M498.9 121.3 q1.8 18.4 5.4 26.3" stroke="#c8149a" stroke-width="2.4" fill="none" opacity="0.49"/><path d="M207.9 110.6 q2.1 18.6 6.2 26.6" stroke="#c8149a" stroke-width="2.4" fill="none" opacity="0.49"/></g><rect width="583" height="195" fill="url(#smask)" filter="url(#st105)" opacity="0.8"/><rect width="583" height="195" filter="url(#spk)" opacity="0.6"/><rect width="583" height="3" fill="url(#topfade)"/></svg><div class="badge" style="background:#7ccf00;padding:0 7px">81%</div><svg class="abs" style="left:68px;top:14px" width="24" height="22" viewBox="0 0 24 22">
<defs><linearGradient id="cg6814" x1="0" y1="0" x2="0" y2="1"><stop offset="0" stop-color="#ffffff"/><stop offset="0.7" stop-color="#eef0f6"/><stop offset="1" stop-color="#c8ccd8"/></linearGradient></defs>
<g stroke="#e8b838" stroke-width="1.3" stroke-linecap="round" opacity="0.9"><line x1="4.75" y1="11.25" x2="3.47" y2="12.53"/><line x1="3.40" y1="8.00" x2="1.60" y2="8.00"/><line x1="4.75" y1="4.75" x2="3.47" y2="3.47"/><line x1="8.00" y1="3.40" x2="8.00" y2="1.60"/><line x1="11.25" y1="4.75" x2="12.53" y2="3.47"/></g>
<circle cx="8" cy="8" r="4" fill="#f3c94e"/>
<g fill="url(#cg6814)"><circle cx="12.8" cy="12.2" r="5.6"/><circle cx="6.6" cy="15.6" r="4.4"/><circle cx="17.2" cy="16" r="4"/><rect x="6.5" y="14" width="11" height="6"/></g>
</svg><div class="temp" style="top:19.42px;line-height:1">13°C</div><svg class="abs" style="left:510px;top:13.2px" width="22" height="20" viewBox="0 0 22 20" fill="none" stroke="#fff" stroke-width="1.7" stroke-linecap="round" stroke-linejoin="round">
<path d="M3 7.8 H5.9 L9.8 4 V17.5 L5.9 13.6 H3 Z"/>
<path d="M14 8.4 Q16.2 10.75 14 13.1"/>
<path d="M17.1 5.7 Q20.7 10.8 17.1 15.9"/>
</svg><svg class="abs" style="left:556px;top:15px" width="6" height="18" viewBox="0 0 6 18" fill="#fff">
<circle cx="3" cy="3.2" r="1.9"/><circle cx="3" cy="9" r="1.9"/><circle cx="3" cy="14.85" r="1.9"/>
</svg><div class="thumb"><svg width="43" height="43" style="display:block"><use href="#th_goldfinch"/></svg></div><div class="name" style="top:192.90px;line-height:1"><span>Lesser Goldfinch</span><span class="unv">Unverified</span></div><div class="sci" style="top:213.85px;line-height:1">Spinus psaltria</div><div class="time" style="top:191.85px;line-height:1">14:23:00</div><div class="ago" style="top:212.84px;line-height:1">2 minutes ago</div></div>
<div class="card" style="left:215px;top:980px"><svg class="spec" width="583" height="195" viewBox="0 0 583 195"><defs><filter color-interpolation-filters="sRGB" id="st106" x="0" y="0" width="100%" height="100%"><feTurbulence type="fractalNoise" baseFrequency="0.13 0.009" numOctaves="2" seed="106" result="t"/><feColorMatrix in="t" type="matrix" values="0 0 0 0 0.8  0 0 0 0 0.08  0 0 0 0 0.55  0 0 0 10 -6.0" result="s"/><feGaussianBlur in="s" stdDeviation="1.1 1.8" result="sb"/><feTurbulence type="fractalNoise" baseFrequency="0.45" numOctaves="1" seed="113" result="n"/><feColorMatrix in="n" type="matrix" values="0 0 0 0 0  0 0 0 0 0  0 0 0 0 0  0 0 0 2.2 -0.2" result="na"/><feComposite in="sb" in2="na" operator="in" result="sp"/><feComposite in="sp" in2="SourceGraphic" operator="in"/></filter></defs><rect width="583" height="195" fill="url(#sg)"/><rect width="583" height="195" filter="url(#blot)" opacity="0.55"/><g filter="url(#cb)"><rect x="9.8" y="28.3" width="4.6" height="166.7" fill="url(#colg)" opacity="0.47"/><rect x="470.1" y="24.1" width="3.4" height="170.9" fill="url(#colg)" opacity="0.79"/><rect x="212.2" y="13.5" width="4.3" height="181.5" fill="url(#colg)" opacity="0.69"/><rect x="435.2" y="8.3" width="4.0" height="186.7" fill="url(#colg)" opacity="0.50"/><rect x="160.2" y="14.7" width="3.1" height="180.3" fill="url(#colg)" opacity="0.57"/><rect x="475.2" y="5.4" width="3.9" height="189.6" fill="url(#colg)" opacity="0.46"/><path d="M187.4 112.5 q3.4 11.7 10.2 16.7" stroke="#c8149a" stroke-width="2.4" fill="none" opacity="0.52"/><path d="M181.7 65.2 q1.3 10.0 4.0 14.3" stroke="#c8149a" stroke-width="2.4" fill="none" opacity="0.57"/><path d="M281.5 55.6 q-0.2 14.1 -0.6 20.2" stroke="#c8149a" stroke-width="2.4" fill="none" opacity="0.49"/><path d="M554.4 71.6 q4.3 14.4 13.0 20.6" stroke="#c8149a" stroke-width="2.4" fill="none" opacity="0.58"/><path d="M462.5 102.7 q0.8 19.5 2.4 27.9" stroke="#c8149a" stroke-width="2.4" fill="none" opacity="0.48"/><path d="M128.0 82.1 q2.4 11.6 7.3 16.6" stroke="#c8149a" stroke-width="2.4" fill="none" opacity="0.54"/><path d="M223.8 136.9 q2.9 9.0 8.8 12.9" stroke="#c8149a" stroke-width="2.4" fill="none" opacity="0.36"/><path d="M201.7 92.7 q2.9 16.7 8.8 23.8" stroke="#c8149a" stroke-width="2.4" fill="none" opacity="0.53"/><path d="M274.8 91.7 q-0.0 18.5 -0.0 26.4" stroke="#c8149a" stroke-width="2.4" fill="none" opacity="0.35"/><path d="M500.6 49.4 q1.2 11.7 3.5 16.7" stroke="#c8149a" stroke-width="2.4" fill="none" opacity="0.55"/></g><rect width="583" height="195" fill="url(#smask)" filter="url(#st106)" opacity="0.8"/><rect width="583" height="195" filter="url(#spk)" opacity="0.6"/><rect width="583" height="3" fill="url(#topfade)"/></svg><div class="badge" style="background:#7ccf00;padding:0 7px">86%</div><svg class="abs" style="left:68px;top:14px" width="24" height="22" viewBox="0 0 24 22">
<defs><linearGradient id="cg6814" x1="0" y1="0" x2="0" y2="1"><stop offset="0" stop-color="#ffffff"/><stop offset="0.7" stop-color="#eef0f6"/><stop offset="1" stop-color="#c8ccd8"/></linearGradient></defs>
<g stroke="#e8b838" stroke-width="1.3" stroke-linecap="round" opacity="0.9"><line x1="4.75" y1="11.25" x2="3.47" y2="12.53"/><line x1="3.40" y1="8.00" x2="1.60" y2="8.00"/><line x1="4.75" y1="4.75" x2="3.47" y2="3.47"/><line x1="8.00" y1="3.40" x2="8.00" y2="1.60"/><line x1="11.25" y1="4.75" x2="12.53" y2="3.47"/></g>
<circle cx="8" cy="8" r="4" fill="#f3c94e"/>
<g fill="url(#cg6814)"><circle cx="12.8" cy="12.2" r="5.6"/><circle cx="6.6" cy="15.6" r="4.4"/><circle cx="17.2" cy="16" r="4"/><rect x="6.5" y="14" width="11" height="6"/></g>
</svg><div class="temp" style="top:19.42px;line-height:1">13°C</div><svg class="abs" style="left:510px;top:13.2px" width="22" height="20" viewBox="0 0 22 20" fill="none" stroke="#fff" stroke-width="1.7" stroke-linecap="round" stroke-linejoin="round">
<path d="M3 7.8 H5.9 L9.8 4 V17.5 L5.9 13.6 H3 Z"/>
<path d="M14 8.4 Q16.2 10.75 14 13.1"/>
<path d="M17.1 5.7 Q20.7 10.8 17.1 15.9"/>
</svg><svg class="abs" style="left:556px;top:15px" width="6" height="18" viewBox="0 0 6 18" fill="#fff">
<circle cx="3" cy="3.2" r="1.9"/><circle cx="3" cy="9" r="1.9"/><circle cx="3" cy="14.85" r="1.9"/>
</svg><div class="thumb"><svg width="43" height="43" style="display:block"><use href="#th_cbch"/></svg></div><div class="name" style="top:192.90px;line-height:1"><span>Chestnut-backed Chickadee</span><span class="unv">Unverified</span></div><div class="sci" style="top:213.85px;line-height:1">Poecile rufescens</div><div class="time" style="top:191.85px;line-height:1">14:22:53</div><div class="ago" style="top:212.84px;line-height:1">2 minutes ago</div></div>
<div class="card" style="left:814px;top:980px"><svg class="spec" width="583" height="195" viewBox="0 0 583 195"><defs><filter color-interpolation-filters="sRGB" id="st107" x="0" y="0" width="100%" height="100%"><feTurbulence type="fractalNoise" baseFrequency="0.13 0.009" numOctaves="2" seed="107" result="t"/><feColorMatrix in="t" type="matrix" values="0 0 0 0 0.8  0 0 0 0 0.08  0 0 0 0 0.55  0 0 0 10 -6.0" result="s"/><feGaussianBlur in="s" stdDeviation="1.1 1.8" result="sb"/><feTurbulence type="fractalNoise" baseFrequency="0.45" numOctaves="1" seed="114" result="n"/><feColorMatrix in="n" type="matrix" values="0 0 0 0 0  0 0 0 0 0  0 0 0 0 0  0 0 0 2.2 -0.2" result="na"/><feComposite in="sb" in2="na" operator="in" result="sp"/><feComposite in="sp" in2="SourceGraphic" operator="in"/></filter></defs><rect width="583" height="195" fill="url(#sg)"/><rect width="583" height="195" filter="url(#blot)" opacity="0.55"/><g filter="url(#cb)"><rect x="361.3" y="23.0" width="4.5" height="172.0" fill="url(#colg)" opacity="0.60"/><rect x="444.9" y="28.7" width="3.8" height="166.3" fill="url(#colg)" opacity="0.64"/><rect x="72.2" y="8.9" width="3.1" height="186.1" fill="url(#colg)" opacity="0.68"/><rect x="539.6" y="25.4" width="3.4" height="169.6" fill="url(#colg)" opacity="0.77"/><path d="M519.9 113.5 q-0.5 11.7 -1.5 16.7" stroke="#c8149a" stroke-width="2.4" fill="none" opacity="0.37"/><path d="M99.0 89.3 q-0.4 10.4 -1.2 14.9" stroke="#c8149a" stroke-width="2.4" fill="none" opacity="0.41"/><path d="M243.6 125.6 q0.1 14.7 0.2 21.0" stroke="#c8149a" stroke-width="2.4" fill="none" opacity="0.45"/><path d="M171.2 69.8 q3.3 17.6 10.0 25.2" stroke="#c8149a" stroke-width="2.4" fill="none" opacity="0.53"/><path d="M501.5 112.8 q0.5 9.9 1.4 14.2" stroke="#c8149a" stroke-width="2.4" fill="none" opacity="0.49"/><path d="M346.9 118.5 q4.1 17.1 12.3 24.4" stroke="#c8149a" stroke-width="2.4" fill="none" opacity="0.59"/></g><rect width="583" height="195" fill="url(#smask)" filter="url(#st107)" opacity="0.8"/><rect width="583" height="195" filter="url(#spk)" opacity="0.6"/><rect width="583" height="3" fill="url(#topfade)"/></svg><div class="badge" style="background:#ff8904;padding:0 7px">42%</div><svg class="abs" style="left:68px;top:14px" width="24" height="22" viewBox="0 0 24 22">
<defs><linearGradient id="cg6814" x1="0" y1="0" x2="0" y2="1"><stop offset="0" stop-color="#ffffff"/><stop offset="0.7" stop-color="#eef0f6"/><stop offset="1" stop-color="#c8ccd8"/></linearGradient></defs>
<g stroke="#e8b838" stroke-width="1.3" stroke-linecap="round" opacity="0.9"><line x1="4.75" y1="11.25" x2="3.47" y2="12.53"/><line x1="3.40" y1="8.00" x2="1.60" y2="8.00"/><line x1="4.75" y1="4.75" x2="3.47" y2="3.47"/><line x1="8.00" y1="3.40" x2="8.00" y2="1.60"/><line x1="11.25" y1="4.75" x2="12.53" y2="3.47"/></g>
<circle cx="8" cy="8" r="4" fill="#f3c94e"/>
<g fill="url(#cg6814)"><circle cx="12.8" cy="12.2" r="5.6"/><circle cx="6.6" cy="15.6" r="4.4"/><circle cx="17.2" cy="16" r="4"/><rect x="6.5" y="14" width="11" height="6"/></g>
</svg><div class="temp" style="top:19.42px;line-height:1">13°C</div><svg class="abs" style="left:510px;top:13.2px" width="22" height="20" viewBox="0 0 22 20" fill="none" stroke="#fff" stroke-width="1.7" stroke-linecap="round" stroke-linejoin="round">
<path d="M3 7.8 H5.9 L9.8 4 V17.5 L5.9 13.6 H3 Z"/>
<path d="M14 8.4 Q16.2 10.75 14 13.1"/>
<path d="M17.1 5.7 Q20.7 10.8 17.1 15.9"/>
</svg><svg class="abs" style="left:556px;top:15px" width="6" height="18" viewBox="0 0 6 18" fill="#fff">
<circle cx="3" cy="3.2" r="1.9"/><circle cx="3" cy="9" r="1.9"/><circle cx="3" cy="14.85" r="1.9"/>
</svg><div class="thumb"><svg width="43" height="43" style="display:block"><use href="#th_bcch"/></svg></div><div class="name" style="top:192.90px;line-height:1"><span>Black-capped Chickadee</span><span class="unv">Unverified</span></div><div class="sci" style="top:213.85px;line-height:1">Poecile atricapillus</div><div class="time" style="top:191.85px;line-height:1">14:22:39</div><div class="ago" style="top:212.84px;line-height:1">3 minutes ago</div></div>
<div class="card" style="left:215px;top:1236px"><svg class="spec" width="583" height="195" viewBox="0 0 583 195"><defs><filter color-interpolation-filters="sRGB" id="st108" x="0" y="0" width="100%" height="100%"><feTurbulence type="fractalNoise" baseFrequency="0.13 0.009" numOctaves="2" seed="108" result="t"/><feColorMatrix in="t" type="matrix" values="0 0 0 0 0.8  0 0 0 0 0.08  0 0 0 0 0.55  0 0 0 10 -6.0" result="s"/><feGaussianBlur in="s" stdDeviation="1.1 1.8" result="sb"/><feTurbulence type="fractalNoise" baseFrequency="0.45" numOctaves="1" seed="115" result="n"/><feColorMatrix in="n" type="matrix" values="0 0 0 0 0  0 0 0 0 0  0 0 0 0 0  0 0 0 2.2 -0.2" result="na"/><feComposite in="sb" in2="na" operator="in" result="sp"/><feComposite in="sp" in2="SourceGraphic" operator="in"/></filter></defs><rect width="583" height="195" fill="url(#sg)"/><rect width="583" height="195" filter="url(#blot)" opacity="0.55"/><g filter="url(#cb)"><rect x="417.0" y="2.5" width="4.3" height="192.5" fill="url(#colg)" opacity="0.70"/><rect x="220.5" y="29.1" width="3.6" height="165.9" fill="url(#colg)" opacity="0.51"/><rect x="414.6" y="9.5" width="3.2" height="185.5" fill="url(#colg)" opacity="0.48"/><rect x="326.2" y="12.7" width="4.1" height="182.3" fill="url(#colg)" opacity="0.68"/><path d="M127.9 128.0 q2.3 18.5 7.0 26.4" stroke="#c8149a" stroke-width="2.4" fill="none" opacity="0.54"/><path d="M322.0 138.9 q-1.1 17.2 -3.4 24.5" stroke="#c8149a" stroke-width="2.4" fill="none" opacity="0.43"/><path d="M369.5 63.7 q1.7 19.1 5.2 27.3" stroke="#c8149a" stroke-width="2.4" fill="none" opacity="0.40"/><path d="M22.9 46.9 q4.2 16.7 12.5 23.8" stroke="#c8149a" stroke-width="2.4" fill="none" opacity="0.49"/><path d="M554.3 58.7 q0.7 15.7 2.1 22.5" stroke="#c8149a" stroke-width="2.4" fill="none" opacity="0.53"/><path d="M15.8 119.2 q3.3 9.9 10.0 14.1" stroke="#c8149a" stroke-width="2.4" fill="none" opacity="0.44"/><path d="M108.8 63.0 q2.2 13.1 6.5 18.7" stroke="#c8149a" stroke-width="2.4" fill="none" opacity="0.47"/><path d="M69.6 104.2 q-1.0 18.7 -2.9 26.7" stroke="#c8149a" stroke-width="2.4" fill="none" opacity="0.40"/></g><rect width="583" height="195" fill="url(#smask)" filter="url(#st108)" opacity="0.8"/><rect width="583" height="195" filter="url(#spk)" opacity="0.6"/><rect width="583" height="3" fill="url(#topfade)"/></svg><div class="badge" style="background:#7ccf00;padding:0 7px">84%</div><svg class="abs" style="left:68px;top:14px" width="24" height="22" viewBox="0 0 24 22">
<defs><linearGradient id="cg6814" x1="0" y1="0" x2="0" y2="1"><stop offset="0" stop-color="#ffffff"/><stop offset="0.7" stop-color="#eef0f6"/><stop offset="1" stop-color="#c8ccd8"/></linearGradient></defs>
<g stroke="#e8b838" stroke-width="1.3" stroke-linecap="round" opacity="0.9"><line x1="4.75" y1="11.25" x2="3.47" y2="12.53"/><line x1="3.40" y1="8.00" x2="1.60" y2="8.00"/><line x1="4.75" y1="4.75" x2="3.47" y2="3.47"/><line x1="8.00" y1="3.40" x2="8.00" y2="1.60"/><line x1="11.25" y1="4.75" x2="12.53" y2="3.47"/></g>
<circle cx="8" cy="8" r="4" fill="#f3c94e"/>
<g fill="url(#cg6814)"><circle cx="12.8" cy="12.2" r="5.6"/><circle cx="6.6" cy="15.6" r="4.4"/><circle cx="17.2" cy="16" r="4"/><rect x="6.5" y="14" width="11" height="6"/></g>
</svg><div class="temp" style="top:19.42px;line-height:1">13°C</div><svg class="abs" style="left:510px;top:13.2px" width="22" height="20" viewBox="0 0 22 20" fill="none" stroke="#fff" stroke-width="1.7" stroke-linecap="round" stroke-linejoin="round">
<path d="M3 7.8 H5.9 L9.8 4 V17.5 L5.9 13.6 H3 Z"/>
<path d="M14 8.4 Q16.2 10.75 14 13.1"/>
<path d="M17.1 5.7 Q20.7 10.8 17.1 15.9"/>
</svg><svg class="abs" style="left:556px;top:15px" width="6" height="18" viewBox="0 0 6 18" fill="#fff">
<circle cx="3" cy="3.2" r="1.9"/><circle cx="3" cy="9" r="1.9"/><circle cx="3" cy="14.85" r="1.9"/>
</svg></div>
<div class="card" style="left:814px;top:1236px"><svg class="spec" width="583" height="195" viewBox="0 0 583 195"><defs><filter color-interpolation-filters="sRGB" id="st109" x="0" y="0" width="100%" height="100%"><feTurbulence type="fractalNoise" baseFrequency="0.13 0.009" numOctaves="2" seed="109" result="t"/><feColorMatrix in="t" type="matrix" values="0 0 0 0 0.8  0 0 0 0 0.08  0 0 0 0 0.55  0 0 0 10 -6.0" result="s"/><feGaussianBlur in="s" stdDeviation="1.1 1.8" result="sb"/><feTurbulence type="fractalNoise" baseFrequency="0.45" numOctaves="1" seed="116" result="n"/><feColorMatrix in="n" type="matrix" values="0 0 0 0 0  0 0 0 0 0  0 0 0 0 0  0 0 0 2.2 -0.2" result="na"/><feComposite in="sb" in2="na" operator="in" result="sp"/><feComposite in="sp" in2="SourceGraphic" operator="in"/></filter></defs><rect width="583" height="195" fill="url(#sg)"/><rect width="583" height="195" filter="url(#blot)" opacity="0.55"/><g filter="url(#cb)"><rect x="133.5" y="13.5" width="3.1" height="181.5" fill="url(#colg)" opacity="0.53"/><rect x="290.4" y="9.0" width="4.8" height="186.0" fill="url(#colg)" opacity="0.48"/><rect x="137.3" y="15.2" width="3.9" height="179.8" fill="url(#colg)" opacity="0.68"/><rect x="531.9" y="9.2" width="4.5" height="185.8" fill="url(#colg)" opacity="0.76"/><rect x="184.6" y="15.7" width="4.3" height="179.3" fill="url(#colg)" opacity="0.45"/><path d="M354.2 53.7 q3.0 19.5 9.0 27.8" stroke="#c8149a" stroke-width="2.4" fill="none" opacity="0.57"/><path d="M378.1 84.6 q1.2 8.9 3.6 12.8" stroke="#c8149a" stroke-width="2.4" fill="none" opacity="0.36"/><path d="M545.2 79.7 q1.0 13.1 3.0 18.7" stroke="#c8149a" stroke-width="2.4" fill="none" opacity="0.60"/><path d="M515.5 109.0 q3.4 13.6 10.1 19.5" stroke="#c8149a" stroke-width="2.4" fill="none" opacity="0.51"/><path d="M450.1 106.5 q-1.0 12.9 -3.1 18.4" stroke="#c8149a" stroke-width="2.4" fill="none" opacity="0.50"/><path d="M381.6 133.2 q3.4 12.3 10.1 17.5" stroke="#c8149a" stroke-width="2.4" fill="none" opacity="0.47"/><path d="M441.6 115.7 q0.8 12.0 2.5 17.1" stroke="#c8149a" stroke-width="2.4" fill="none" opacity="0.50"/></g><rect width="583" height="195" fill="url(#smask)" filter="url(#st109)" opacity="0.8"/><rect width="583" height="195" filter="url(#spk)" opacity="0.6"/><rect width="583" height="3" fill="url(#topfade)"/></svg><div class="badge" style="background:#7ccf00;padding:0 7px">81%</div><svg class="abs" style="left:68px;top:14px" width="24" height="22" viewBox="0 0 24 22">
<defs><linearGradient id="cg6814" x1="0" y1="0" x2="0" y2="1"><stop offset="0" stop-color="#ffffff"/><stop offset="0.7" stop-color="#eef0f6"/><stop offset="1" stop-color="#c8ccd8"/></linearGradient></defs>
<g stroke="#e8b838" stroke-width="1.3" stroke-linecap="round" opacity="0.9"><line x1="4.75" y1="11.25" x2="3.47" y2="12.53"/><line x1="3.40" y1="8.00" x2="1.60" y2="8.00"/><line x1="4.75" y1="4.75" x2="3.47" y2="3.47"/><line x1="8.00" y1="3.40" x2="8.00" y2="1.60"/><line x1="11.25" y1="4.75" x2="12.53" y2="3.47"/></g>
<circle cx="8" cy="8" r="4" fill="#f3c94e"/>
<g fill="url(#cg6814)"><circle cx="12.8" cy="12.2" r="5.6"/><circle cx="6.6" cy="15.6" r="4.4"/><circle cx="17.2" cy="16" r="4"/><rect x="6.5" y="14" width="11" height="6"/></g>
</svg><div class="temp" style="top:19.42px;line-height:1">13°C</div><svg class="abs" style="left:510px;top:13.2px" width="22" height="20" viewBox="0 0 22 20" fill="none" stroke="#fff" stroke-width="1.7" stroke-linecap="round" stroke-linejoin="round">
<path d="M3 7.8 H5.9 L9.8 4 V17.5 L5.9 13.6 H3 Z"/>
<path d="M14 8.4 Q16.2 10.75 14 13.1"/>
<path d="M17.1 5.7 Q20.7 10.8 17.1 15.9"/>
</svg><svg class="abs" style="left:556px;top:15px" width="6" height="18" viewBox="0 0 6 18" fill="#fff">
<circle cx="3" cy="3.2" r="1.9"/><circle cx="3" cy="9" r="1.9"/><circle cx="3" cy="14.85" r="1.9"/>
</svg></div>
</div></div></body></html>
